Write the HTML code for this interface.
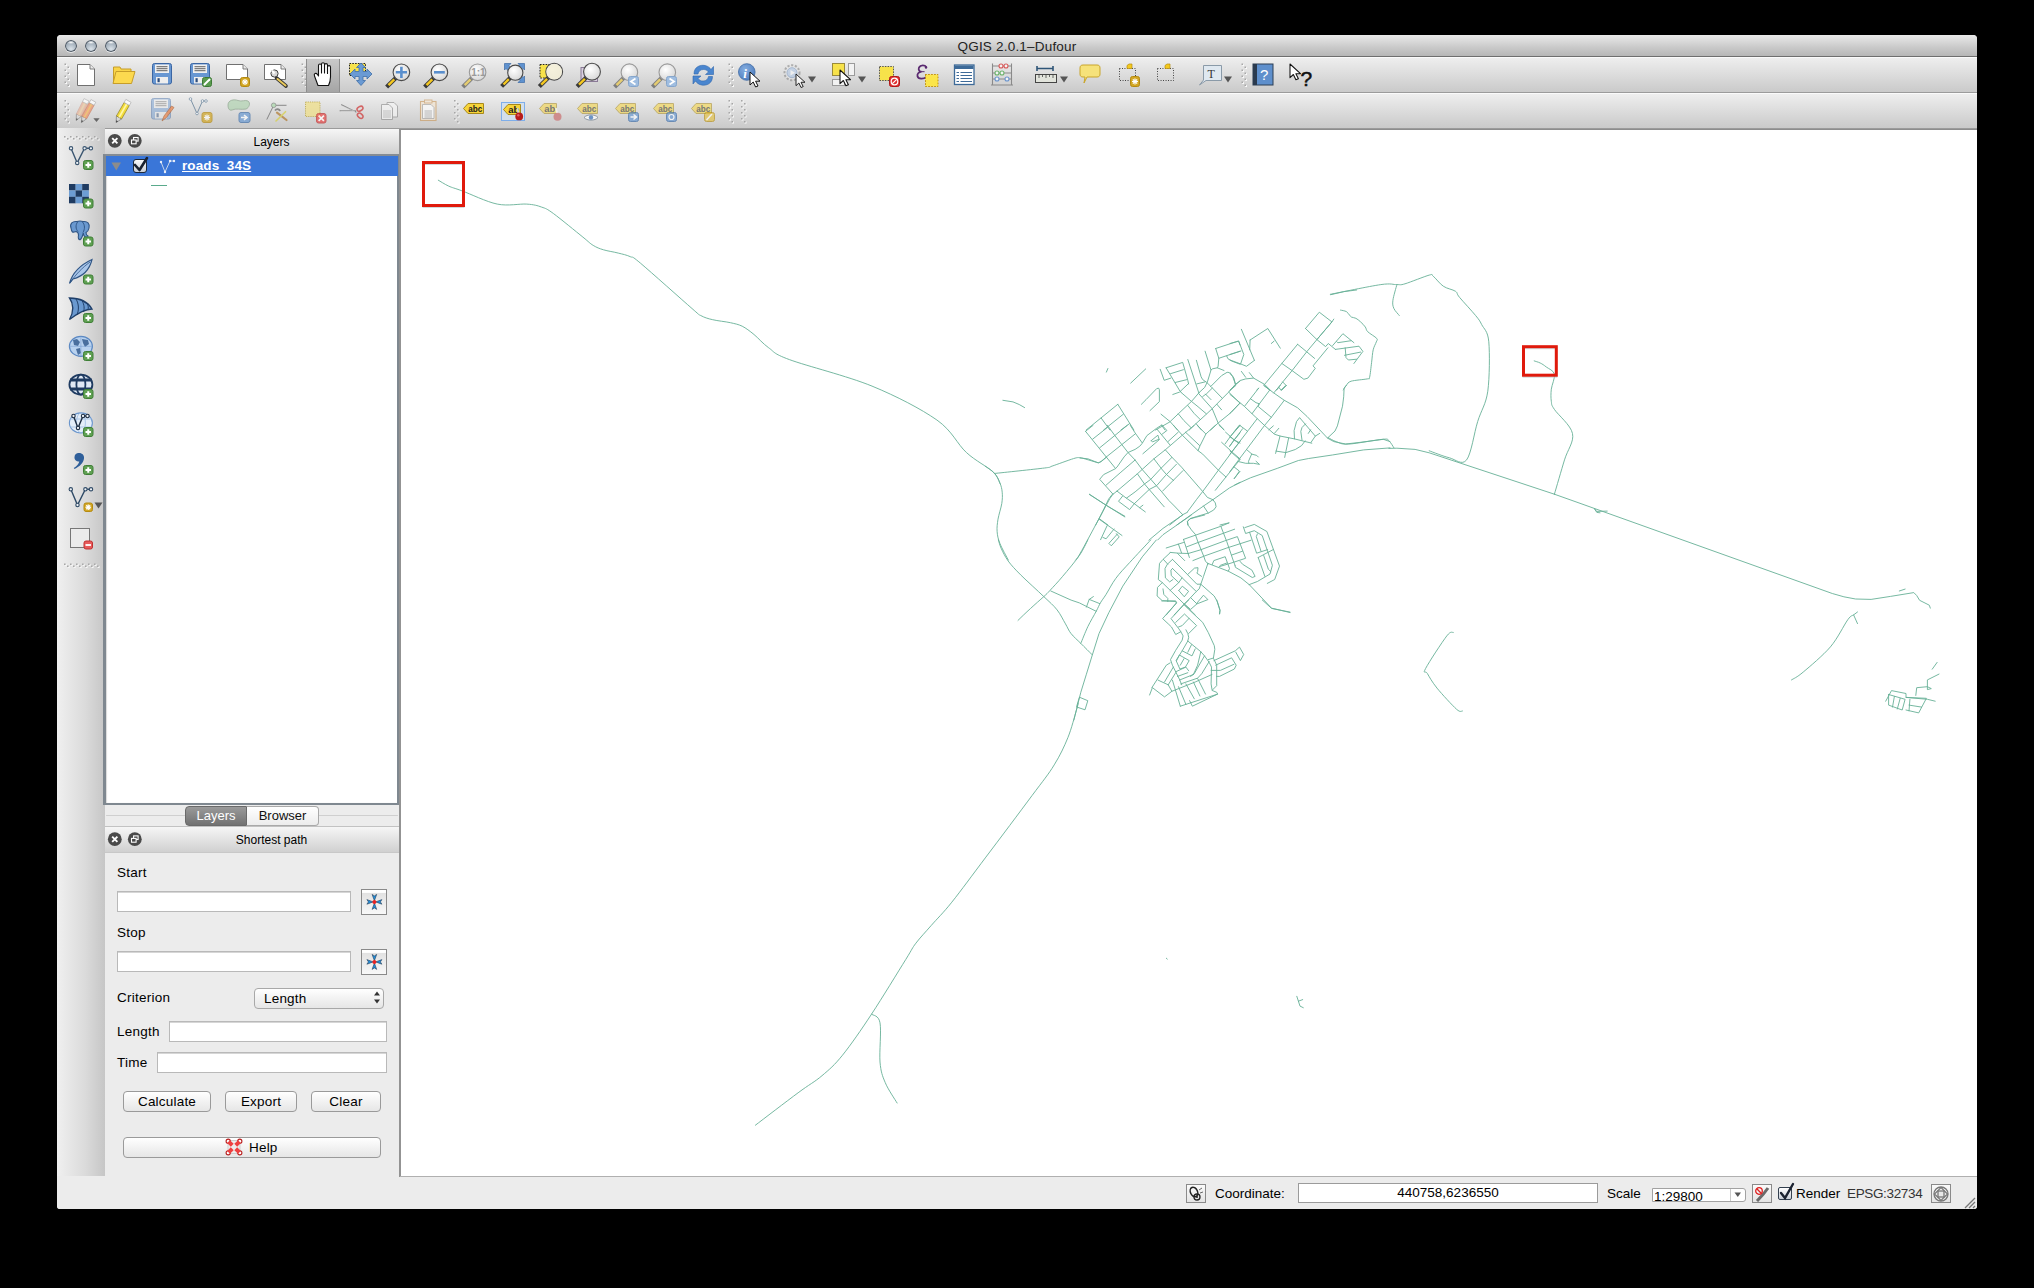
<!DOCTYPE html>
<html><head><meta charset="utf-8">
<style>
*{margin:0;padding:0;box-sizing:border-box}
html,body{width:2034px;height:1288px;background:#000;overflow:hidden;font-family:"Liberation Sans",sans-serif;font-size:13px;color:#000}
.a{position:absolute}
#win{left:57px;top:35px;width:1920px;height:1174px;background:#ececec;border-radius:4px 4px 3px 3px;overflow:hidden}
#title{left:0;top:0;width:1920px;height:22px;background:linear-gradient(#e9e9e9,#c9c9c9 60%,#b6b6b6);border-bottom:1px solid #6e6e6e}
#title .t{left:0;top:4px;width:1920px;text-align:center;font-size:13.5px;letter-spacing:0.2px;color:#222}
.tl{width:12px;height:12px;border-radius:50%;top:5px;background:radial-gradient(ellipse 35% 14% at 50% 20%,rgba(255,255,255,0.95),rgba(255,255,255,0) 100%),radial-gradient(circle at 50% 75%,#dbe3ea 0,#a9b5c0 50%,#8593a0 100%);box-shadow:inset 0 0 0 1px #4b5560,0 1px 0 rgba(255,255,255,0.6)}
.tb{left:0;width:1920px;height:36px;background:linear-gradient(#eeeeee,#cacaca);border-top:1px solid #fafafa;border-bottom:1px solid #9b9b9b}
.grip{width:5px;background-image:radial-gradient(circle,#a9a9a9 0 1px,transparent 1.2px);background-size:5px 5px}
#ltb{left:0;top:93px;width:48px;height:1048px;background:linear-gradient(90deg,#f0f0f0,#dadada 60%,#c6c6c6)}
#dock1{left:48px;top:94px;width:295px;height:676px}
.dtitle{left:0;top:0;width:295px;height:25px;background:linear-gradient(#f6f6f6,#d0d0d0)}
.dtitle .t{left:38px;top:6px;width:257px;text-align:center;font-size:12px}
.cbtn{width:14px;height:14px;border-radius:50%;background:#4a4a4a;top:5px}
#map{left:342px;top:94px;width:1578px;height:1048px;background:#fff;border-top:1px solid #8d8d8d;border-left:2px solid #939393}
#status{left:0;top:1142px;width:1920px;height:33px;background:#ececec}
#status:before{content:"";position:absolute;left:343px;top:-1px;width:1577px;height:1px;background:#b0b0b0}
.inp{background:#fff;border:1px solid #b9b9b9;box-shadow:inset 0 1px 0 #d6d6d6}
.btn{background:linear-gradient(#fff,#f2f2f2 50%,#e6e6e6);border:1px solid #9a9a9a;border-radius:4px;text-align:center;font-size:13.5px;letter-spacing:0.2px}
.lbl{font-size:13.5px;letter-spacing:0.25px}
</style></head><body>
<div id="win" class="a">
  <div id="title" class="a">
    <div class="a tl" style="left:8px"></div>
    <div class="a tl" style="left:28px"></div>
    <div class="a tl" style="left:48px"></div>
    <div class="a t">QGIS 2.0.1&#8211;Dufour</div>
  </div>
  <div class="a tb" style="top:22px"></div>
  <div class="a tb" style="top:58px"></div>
  <div id="ltb" class="a"></div>
  <div id="dock1" class="a">
    <div class="a dtitle"><div class="a t">Layers</div></div>
    <div class="a" style="left:-2px;top:25px;width:297px;height:651px;background:#fff;border:2px solid #7f8890;border-left:3px solid #7f8890;border-right:3px solid #7f8890;border-top:2px solid #858c94;box-shadow:inset 1px 0 1px rgba(0,0,0,0.15)"></div>
  </div>
  <!-- layers list content (page coords offset) -->
  <div class="a" style="left:49px;top:121px;width:292px;height:20px;background:#3a76d8"></div>
  <svg class="a" style="left:54px;top:127px" width="11" height="9"><path d="M0.5 0.5 L10 0.5 L5.3 8.5Z" fill="#8c8c8c"/></svg>
  <div class="a" style="left:76px;top:124px;width:14px;height:14px;border-radius:3px;background:linear-gradient(#fafafa,#c9ced6);border:1px solid #1f2a38"></div>
  <svg class="a" style="left:74px;top:120px" width="20" height="20"><path d="M4 10 L8.5 15 L16 3" stroke="#1a2230" stroke-width="2.6" fill="none" stroke-linecap="round" stroke-linejoin="round"/></svg>
  <svg class="a" style="left:102px;top:123px" width="18" height="16"><path d="M2 4 L6 14 L11 3 L15 3" stroke="#c8d6ea" stroke-width="1" fill="none"/><circle cx="2" cy="4" r="1.2" fill="#e8eef8"/><circle cx="6" cy="14" r="1.2" fill="#e8eef8"/><circle cx="11" cy="3" r="1.2" fill="#e8eef8"/><circle cx="15" cy="3" r="1.2" fill="#e8eef8"/></svg>
  <div class="a" style="left:125px;top:123px;font-size:13.5px;font-weight:bold;color:#fff;text-decoration:underline;letter-spacing:0.1px">roads_34S</div>
  <div class="a" style="left:94px;top:150px;width:16px;height:1px;background:#5aaa8c"></div>

  <!-- tab bar -->
  <div class="a" style="left:49px;top:780px;width:292px;height:1px;background:#cfcfcf;border-radius:2px"></div>
  <div class="a" style="left:128px;top:771px;width:62px;height:20px;border-radius:4px 0 0 4px;background:linear-gradient(#9a9a9a,#727272);border:1px solid #6a6a6a;color:#fff;text-align:center;font-size:13px;line-height:18px">Layers</div>
  <div class="a" style="left:190px;top:771px;width:72px;height:20px;border-radius:0 4px 4px 0;background:linear-gradient(#ffffff,#ececec);border:1px solid #a9a9a9;border-left:none;color:#111;text-align:center;font-size:13px;line-height:18px">Browser</div>
  <div class="a" style="left:48px;top:791px;width:295px;height:1px;background:#c2c2c2"></div>

  <!-- shortest path dock -->
  <div class="a" style="left:48px;top:792px;width:295px;height:349px">
    <div class="a dtitle"><div class="a t">Shortest path</div></div>
    <div class="a" style="left:0;top:25px;width:295px;height:1px;background:#c8c8c8"></div>
  </div>
  <div class="a lbl" style="left:60px;top:830px">Start</div>
  <div class="a inp" style="left:60px;top:856px;width:234px;height:21px"></div>
  <div class="a btn" style="left:304px;top:854px;width:26px;height:26px;border-radius:0;border-color:#8a8a8a;background:linear-gradient(#fff 0,#fff 10%,#e2e2e2 14%,#f8f8f8 100%)"></div>
  <div class="a lbl" style="left:60px;top:890px">Stop</div>
  <div class="a inp" style="left:60px;top:916px;width:234px;height:21px"></div>
  <div class="a btn" style="left:304px;top:914px;width:26px;height:26px;border-radius:0;border-color:#8a8a8a;background:linear-gradient(#fff 0,#fff 10%,#e2e2e2 14%,#f8f8f8 100%)"></div>
  <div class="a lbl" style="left:60px;top:955px">Criterion</div>
  <div class="a btn" style="left:197px;top:953px;width:130px;height:21px;text-align:left;padding-left:9px;line-height:19px;border-color:#a8a8a8">Length</div>
  <div class="a lbl" style="left:60px;top:989px">Length</div>
  <div class="a inp" style="left:112px;top:986px;width:218px;height:21px"></div>
  <div class="a lbl" style="left:60px;top:1020px">Time</div>
  <div class="a inp" style="left:100px;top:1017px;width:230px;height:21px"></div>
  <div class="a btn" style="left:66px;top:1056px;width:88px;height:21px;line-height:19px">Calculate</div>
  <div class="a btn" style="left:168px;top:1056px;width:72px;height:21px;line-height:19px">Export</div>
  <div class="a btn" style="left:254px;top:1056px;width:70px;height:21px;line-height:19px">Clear</div>
  <div class="a btn" style="left:66px;top:1102px;width:258px;height:21px;line-height:19px;text-align:left;padding-left:125px">Help</div>

  <div id="map" class="a"></div>
  <div id="status" class="a">
    <div class="a" style="left:1129px;top:7px;width:20px;height:19px;border:1px solid #8a8a8a;background:linear-gradient(#fafafa,#e4e4e4)"></div>
    <svg class="a" style="left:1131px;top:9px" width="16" height="16"><ellipse cx="6" cy="6" rx="3.5" ry="5" fill="none" stroke="#222" stroke-width="1.5" transform="rotate(-25 6 6)"/><circle cx="9" cy="11" r="3" fill="none" stroke="#222" stroke-width="1.3"/><circle cx="9" cy="11" r="1" fill="#222"/><path d="M11 4 L14 2 M12 7 L15 6" stroke="#444" stroke-width="0.8"/></svg>
    <div class="a" style="left:1158px;top:9px;font-size:13.5px">Coordinate:</div>
    <div class="a" style="left:1241px;top:6px;width:300px;height:20px;background:#fff;border:1px solid #9b9b9b;text-align:center;font-size:13.5px;line-height:18px;padding-left:0px">440758,6236550</div>
    <div class="a" style="left:1550px;top:9px;font-size:13.5px">Scale</div>
    <div class="a" style="left:1595px;top:11px;width:94px;height:14px;background:#fff;border:1px solid #a2a2a2;border-radius:0 3px 3px 0;font-size:13.5px;line-height:16px;padding-left:1px;overflow:visible">1:29800</div>
    <div class="a" style="left:1673px;top:12px;width:1px;height:12px;background:#c9c9c9"></div>
    <svg class="a" style="left:1677px;top:15px" width="8" height="6"><path d="M0.5 0.5 L7 0.5 L3.8 5Z" fill="#555"/></svg>
    <div class="a" style="left:1695px;top:7px;width:20px;height:19px;border:1px solid #8a8a8a;background:linear-gradient(#fafafa,#e4e4e4)"></div>
    <svg class="a" style="left:1697px;top:9px" width="16" height="16"><path d="M3 15 C6 12 10 8 14 2" stroke="#6a6a6a" stroke-width="3" fill="none"/><circle cx="5" cy="5" r="3.3" fill="none" stroke="#e02020" stroke-width="1.3"/><path d="M2.8 2.8 L7.2 7.2" stroke="#e02020" stroke-width="1.3"/></svg>
    <div class="a" style="left:1721px;top:10px;width:14px;height:13px;border:1px solid #33404f;border-radius:2px;background:linear-gradient(#fff,#c8ced8)"></div>
    <svg class="a" style="left:1721px;top:4px" width="18" height="20"><path d="M3 12 L7 17 L15 3" stroke="#1a2230" stroke-width="2.4" fill="none" stroke-linecap="round"/></svg>
    <div class="a" style="left:1739px;top:9px;font-size:13.5px">Render</div>
    <div class="a" style="left:1790px;top:9px;font-size:13.5px;color:#333;letter-spacing:-0.35px">EPSG:32734</div>
    <div class="a" style="left:1874px;top:7px;width:20px;height:19px;border:1px solid #8a8a8a;background:linear-gradient(#fafafa,#e4e4e4)"></div>
    <svg class="a" style="left:1876px;top:9px" width="16" height="16"><circle cx="8" cy="8" r="7" fill="none" stroke="#777" stroke-width="1.3"/><path d="M8 1.5 L14.5 8 L8 14.5 L1.5 8 Z" fill="none" stroke="#777" stroke-width="1.2"/><rect x="5" y="5" width="6" height="6" fill="#e8e8e8" stroke="#777" stroke-width="1.3"/></svg>
    <svg class="a" style="left:1906px;top:20px" width="13" height="13"><path d="M12 1 L2 11 M12 5 L6 11 M12 9 L10 11" stroke="#777" stroke-width="1.3"/></svg>
  </div>
</div>
<!--ROADS--><svg class="a" style="left:0;top:0" width="2034" height="1288" viewBox="0 0 2034 1288"><defs><clipPath id="mc"><rect x="401" y="130" width="1575" height="1046"/></clipPath></defs><g clip-path="url(#mc)" fill="none" stroke="#66b096" stroke-width="0.9" stroke-linejoin="round" stroke-linecap="round"><path d="M1554.4 494.2 L1580.0 503.3 L1832.3 593.5 L1843.9 596.8 L1855.6 599.0 L1871.1 599.4 L1890.5 596.4 L1913.8 592.6 L1916.7 595.5 L1919.6 600.3 L1929.3 605.2 L1930.3 608.1 M1594.6 508.7 L1596.5 511.4 L1607.2 511.1 M1899.3 591.0 L1905.1 589.1 M1857.5 612.0 C1856.9 612.5 1855.3 613.6 1853.6 614.9 C1852.0 616.2 1851.7 614.4 1847.8 619.7 C1843.9 625.1 1837.8 638.2 1830.4 646.9 C1822.9 655.6 1809.7 666.6 1803.2 672.1 C1796.7 677.6 1793.5 678.6 1791.5 679.9 M1853.6 614.9 L1857.5 623.6 M1932.2 669.2 L1937.1 662.4 M1885.7 701.2 L1891.5 690.6 L1906.0 693.5 L1906.0 697.4 L1927.4 699.3 L1935.2 701.2 M1888.6 694.5 L1905.1 699.3 L1902.2 710.0 L1888.6 705.1 L1888.6 694.5 M1894.4 696.4 L1892.5 707.1 M1900.2 698.3 L1897.3 709.0 M1906.0 697.4 L1926.4 698.3 L1918.7 712.9 L1906.0 710.0 M1909.9 699.3 L1909.0 710.9 M1909.0 705.1 L1921.6 707.1 M1915.8 695.4 L1916.7 687.7 L1927.4 686.7 L1931.3 688.6 L1927.4 689.6 L1927.4 679.9 L1939.0 674.1 M1002.9 400.3 L1013.0 401.9 L1019.2 404.5 L1024.6 407.6 M1330.3 294.3 C1338.7 292.7 1369.7 286.2 1380.8 284.6 C1391.9 283.0 1392.9 284.8 1396.9 284.6 C1400.9 284.5 1399.6 285.4 1405.0 283.8 C1410.4 282.2 1424.5 276.4 1429.2 275.1 C1433.9 273.9 1430.9 274.3 1433.2 276.2 C1435.6 278.0 1439.6 283.7 1443.3 286.2 C1447.0 288.8 1452.8 289.4 1455.5 291.3 C1458.1 293.1 1456.1 293.3 1459.5 297.3 C1462.9 301.4 1471.9 311.0 1475.6 315.5 C1479.3 320.1 1479.5 320.2 1481.7 324.6 C1483.9 329.0 1487.8 330.7 1488.8 341.8 C1489.8 352.9 1489.6 377.9 1487.8 391.2 C1485.9 404.5 1481.2 410.1 1477.7 421.5 C1474.1 432.9 1471.3 453.8 1466.6 459.9 C1461.8 465.9 1455.6 459.4 1449.4 457.8 C1443.2 456.3 1432.6 452.0 1429.2 450.8 M1396.9 284.6 C1396.2 287.3 1393.4 296.4 1392.9 300.4 C1392.4 304.3 1392.8 305.9 1393.9 308.5 C1395.0 311.0 1398.4 314.3 1399.3 315.5 M1388.8 448.4 L1396.9 448.2 L1415.1 449.4 L1429.2 452.8 L1554.4 494.2 M1328.3 437.7 C1329.6 438.3 1333.0 440.6 1336.3 441.7 C1339.7 442.8 1340.7 444.5 1348.5 444.1 C1356.2 443.7 1376.0 439.8 1382.8 439.3 C1389.5 438.7 1387.0 439.3 1388.8 440.7 C1390.7 442.1 1393.0 446.6 1393.9 447.8 M1534.2 360.9 C1535.2 361.3 1538.2 362.0 1540.2 363.0 C1542.3 364.0 1543.9 365.1 1546.3 367.0 C1548.7 368.8 1553.5 370.4 1554.4 374.1 C1555.2 377.8 1551.9 384.7 1551.3 389.2 C1550.8 393.7 1550.8 398.0 1551.3 401.3 C1551.9 404.7 1550.8 404.0 1554.4 409.4 C1557.9 414.8 1570.9 425.2 1572.5 433.6 C1574.2 442.0 1567.5 449.8 1564.5 459.9 C1561.4 470.0 1556.1 488.5 1554.4 494.2 M1594.8 509.3 L1596.8 512.4 L1600.0 512.8 M438.3 180.2 C440.1 181.2 444.7 184.3 448.7 186.1 C452.6 187.9 453.8 187.8 461.9 190.8 C470.1 193.8 486.5 201.9 497.3 204.1 C508.2 206.3 519.5 203.6 526.8 204.1 C534.2 204.6 537.2 205.5 541.6 207.1 C546.0 208.6 546.5 208.5 553.4 213.5 C560.3 218.6 576.3 231.8 582.9 237.1 C589.5 242.5 589.8 243.3 593.2 245.4 C596.7 247.5 599.4 248.6 603.5 249.8 C607.7 251.1 613.9 251.9 618.3 253.1 C622.7 254.2 626.4 254.9 630.1 256.6 C633.8 258.3 630.1 254.5 640.4 263.1 C650.7 271.8 682.0 299.8 692.0 308.5 C702.1 317.3 697.4 313.7 700.9 315.6 C704.3 317.5 707.8 318.6 712.7 319.7 C717.6 320.9 725.5 321.6 730.4 322.7 C735.3 323.8 738.2 324.3 742.2 326.2 C746.1 328.2 749.6 330.9 754.0 334.5 C758.4 338.1 762.8 343.6 768.7 347.8 C774.6 351.9 772.2 353.2 789.4 359.6 C806.6 366.0 847.4 376.0 872.0 386.1 C896.6 396.2 921.1 409.0 936.9 420.0 C952.6 431.1 957.0 443.9 966.4 452.5 C975.7 461.1 987.3 466.5 992.9 471.7 C998.5 476.8 998.8 481.5 1000.0 483.5 M1453.4 632.6 C1452.3 633.2 1451.5 629.9 1446.8 635.9 C1442.2 641.9 1428.9 662.2 1425.6 668.5 C1422.4 674.8 1425.4 670.1 1427.3 673.4 C1429.2 676.7 1432.2 682.1 1437.0 688.1 C1441.9 694.1 1452.4 705.5 1456.6 709.3 C1460.9 713.1 1461.5 710.6 1462.5 710.9 M1166.3 958.2 L1167.3 959.1 M1296.8 996.3 L1300.0 1006.1 L1303.3 1007.7 M1298.4 1001.2 L1302.7 999.6 M998.4 540.0 C998.9 541.4 999.6 544.9 1001.2 548.4 C1002.8 551.9 1004.9 556.5 1008.2 561.0 C1011.4 565.4 1014.8 569.0 1020.7 574.9 C1026.7 580.9 1037.8 590.8 1043.8 596.6 C1049.9 602.4 1053.5 605.3 1057.1 609.9 C1060.7 614.4 1063.1 619.9 1065.5 623.9 C1067.8 627.8 1068.5 630.4 1071.1 633.6 C1073.6 636.9 1077.4 639.9 1080.8 643.4 C1084.3 646.9 1090.2 652.7 1092.0 654.6 M1087.8 540.0 C1086.4 542.6 1083.6 549.3 1079.4 555.4 C1075.3 561.4 1067.6 570.5 1062.7 576.3 C1057.8 582.2 1053.2 586.9 1050.1 590.3 C1047.0 593.7 1047.1 593.6 1043.8 596.6 C1040.5 599.6 1034.8 604.5 1030.5 608.5 C1026.2 612.4 1020.0 618.4 1018.0 620.4 M1050.8 591.0 L1071.1 600.1 L1079.4 602.9 L1096.2 611.3 M1086.4 607.1 L1089.2 599.4 L1093.4 596.6 M1089.2 599.4 L1099.7 603.6 M1150.7 540.0 C1147.2 543.7 1135.6 556.0 1129.8 562.4 C1123.9 568.8 1119.7 573.1 1115.8 578.4 C1111.8 583.8 1108.6 590.4 1106.0 594.5 C1103.4 598.6 1102.0 600.1 1100.4 602.9 C1098.8 605.7 1098.3 607.3 1096.2 611.3 C1094.1 615.2 1090.4 621.3 1087.8 626.7 C1085.3 632.0 1082.0 640.6 1080.8 643.4 M1156.3 540.0 L1142.3 556.8 L1122.8 586.1 L1108.8 612.7 L1099.0 633.6 L1092.0 656.0 L1086.4 674.2 L1080.8 692.3 L1073.9 720.0 M1076.7 706.3 L1079.4 697.2 L1087.8 700.7 L1085.0 709.8 L1076.7 707.0 M1078.1 703.4 C1077.9 704.6 1078.1 704.6 1076.4 710.2 C1074.7 715.9 1071.6 728.5 1067.9 737.6 C1064.2 746.7 1060.2 755.2 1054.2 764.9 C1048.3 774.6 1043.4 780.3 1032.0 795.6 C1020.6 811.0 999.3 839.4 985.9 857.1 C972.5 874.9 960.9 890.8 951.8 902.2 C942.7 913.6 937.2 918.6 931.3 925.4 C925.3 932.3 920.2 937.5 915.9 943.2 C911.6 948.9 913.1 947.7 905.7 959.6 C898.3 971.4 882.0 998.3 871.5 1014.2 C861.0 1030.2 850.7 1045.0 842.5 1055.2 C834.2 1065.5 829.4 1069.4 822.0 1075.7 C814.6 1082.0 809.2 1084.5 798.1 1092.8 C787.0 1101.0 762.5 1119.8 755.4 1125.2 M871.5 1014.2 C872.9 1015.7 878.6 1014.8 880.0 1022.8 C881.5 1030.7 879.2 1052.1 880.0 1062.0 C880.9 1072.0 882.3 1075.7 885.2 1082.5 C888.0 1089.4 895.1 1099.6 897.1 1103.0 M1106.4 372.1 L1107.9 368.5 M1130.7 383.1 L1145.7 368.9 M1141.4 404.3 L1146.1 399.6 L1156.7 388.6 L1158.7 388.2 L1159.4 389.8 L1159.4 401.6 L1150.0 410.6 M1086.3 429.9 L1117.8 404.3 M1117.8 404.3 L1133.9 430.0 M1101.2 418.1 L1109.9 430.0 M1103.6 430.0 L1123.3 414.2 M1120.9 430.0 L1129.6 423.6 M1160.2 369.3 L1164.2 380.3 L1170.9 378.1 M1166.1 367.8 L1182.7 362.4 L1187.8 380.3 L1188.6 383.9 M1166.1 367.8 L1179.9 391.0 L1181.1 392.1 M1170.5 373.7 L1183.4 369.7 M1175.2 382.5 L1186.6 379.7 M1172.8 394.5 L1179.5 392.1 L1188.6 383.5 M1187.8 359.5 L1198.8 392.9 M1196.4 360.3 L1201.1 376.8 L1202.7 379.6 L1206.6 382.3 L1211.0 386.6 L1222.4 398.4 M1205.1 351.2 L1211.0 370.1 L1207.4 381.9 L1204.7 387.4 L1199.2 392.5 M1196.8 383.9 L1205.1 381.9 M1215.7 348.5 L1238.5 341.0 L1240.0 344.9 M1218.8 358.3 L1240.0 351.2 M1215.7 348.5 L1218.8 358.3 L1218.1 366.2 L1217.3 367.8 L1212.2 368.9 L1211.0 370.1 M1217.3 367.8 L1224.0 370.5 M1226.7 356.0 L1227.9 358.7 L1231.8 361.1 L1240.0 364.2 M1210.6 386.6 L1221.6 375.6 L1227.1 372.3 L1229.1 372.5 L1232.6 376.4 L1234.6 381.9 L1235.4 384.3 M1240.0 381.1 L1235.4 384.3 L1228.7 392.1 L1222.4 398.4 L1212.2 408.7 L1205.9 414.6 L1196.0 423.6 L1189.3 430.0 M1180.7 392.1 L1191.7 401.6 L1198.0 406.7 L1206.3 413.8 M1199.2 392.5 L1191.7 401.2 L1178.3 413.8 L1169.7 422.0 L1155.5 430.0 M1212.2 388.2 L1206.6 393.7 L1202.7 396.5 M1198.8 393.7 L1212.2 408.7 L1218.4 423.6 L1224.0 430.0 M1205.5 394.1 L1211.0 399.6 M1228.7 392.1 L1240.0 403.2 M1216.9 404.3 L1221.6 409.8 M1240.0 403.2 L1231.0 412.6 L1218.4 422.8 L1210.6 430.0 M1187.8 405.5 L1194.1 413.4 L1200.4 419.7 M1161.0 414.2 L1170.1 421.6 L1177.5 430.0 M1178.3 413.8 L1183.8 420.5 L1190.9 427.5 M1161.8 425.6 L1165.0 430.0 M1196.0 423.6 L1201.5 430.0 M1240.0 425.2 L1235.8 430.0 M1330.7 294.7 L1344.1 291.6 L1356.6 290.0 M1340.5 310.1 C1341.5 310.3 1344.9 310.8 1346.4 311.6 C1347.9 312.5 1348.7 314.3 1349.6 315.2 C1350.4 316.1 1350.5 316.6 1351.5 317.1 C1352.6 317.7 1354.4 317.5 1355.9 318.3 C1357.4 319.1 1359.0 320.4 1360.6 321.9 C1362.2 323.3 1364.1 325.3 1365.3 327.0 C1366.5 328.6 1365.8 329.8 1367.7 331.7 C1369.6 333.6 1375.3 336.7 1376.7 338.4 C1378.1 340.1 1376.9 340.0 1376.3 341.9 C1375.7 343.8 1374.0 346.4 1373.2 349.8 C1372.4 353.2 1372.2 357.8 1371.6 362.4 C1371.0 367.0 1370.3 374.6 1369.6 377.3 C1368.9 380.1 1370.3 378.2 1367.3 378.9 C1364.2 379.5 1354.6 380.2 1351.1 381.2 C1347.7 382.3 1347.7 383.7 1346.4 385.2 C1345.1 386.6 1343.8 389.2 1343.3 390.0 M1305.5 328.5 L1319.3 312.2 L1331.9 321.9 L1316.9 339.6 L1305.5 328.5 M1331.9 321.9 L1333.8 319.1 M1316.9 339.6 L1325.6 346.6 L1328.3 343.5 L1335.4 349.4 M1331.9 321.9 L1316.9 339.6 L1306.7 351.8 L1292.1 370.6 L1282.7 382.0 L1276.4 390.0 M1297.6 344.3 L1264.6 384.4 M1297.6 344.3 L1306.7 351.8 L1314.6 358.4 M1281.9 363.5 L1292.1 370.6 L1303.9 379.3 L1307.9 378.1 L1315.3 368.3 L1313.0 365.9 L1327.9 347.8 M1332.7 345.5 L1342.9 333.7 L1353.9 342.7 M1336.6 341.5 L1337.8 342.7 L1351.1 340.7 M1335.4 349.4 L1359.0 346.2 L1362.9 351.4 L1353.9 363.5 M1344.5 355.3 L1360.6 352.1 M1345.2 347.8 L1346.0 357.6 L1348.4 360.0 L1356.6 359.2 M1230.0 343.5 L1238.7 341.1 L1243.8 354.5 L1240.6 363.9 M1241.4 329.3 L1254.4 360.4 M1230.0 354.5 L1241.0 351.0 M1230.0 360.0 L1240.6 363.9 L1246.5 366.3 L1254.4 360.4 M1250.1 340.0 L1267.8 328.5 L1280.3 348.2 M1250.1 340.0 L1249.7 349.8 M1271.3 343.5 L1274.1 341.1 M1230.0 372.6 L1233.9 378.1 L1235.5 384.4 M1241.4 371.4 L1245.7 377.3 M1249.3 372.6 L1253.6 378.1 M1230.0 390.0 L1240.2 380.5 L1245.7 378.9 L1253.6 378.1 L1264.6 384.4 L1270.1 390.0 M1282.7 382.0 L1285.9 385.2 L1281.1 390.0 M1276.4 390.0 L1278.8 387.5 M1256.7 390.0 L1258.7 388.3 M1085.5 431.3 L1115.4 468.3 M1085.5 431.3 L1093.0 425.4 M1092.6 439.2 L1107.5 427.4 M1099.7 447.8 L1127.2 425.4 M1106.4 456.9 L1121.7 444.7 L1135.1 434.0 M1107.5 425.4 L1114.6 435.2 L1121.3 443.9 L1128.0 452.5 L1135.1 460.0 L1142.1 469.4 L1150.8 479.3 L1161.8 491.9 L1168.9 500.5 L1174.4 506.0 L1182.7 514.7 M1130.3 425.4 L1135.1 432.9 L1142.1 442.7 M1161.8 425.0 L1156.3 428.5 L1146.9 435.6 L1142.1 443.5 L1139.8 446.2 L1135.1 449.4 L1128.0 452.5 L1124.1 456.9 L1117.0 467.1 L1115.4 468.7 L1103.6 474.6 L1099.7 479.3 L1113.0 494.2 L1117.0 491.1 M1080.0 458.0 L1087.9 458.8 L1098.1 462.8 L1101.2 461.6 L1106.4 457.3 M1106.0 485.2 L1120.9 472.2 L1135.1 460.0 M1117.0 491.1 L1137.4 473.8 L1153.9 458.8 L1165.3 449.8 L1182.3 435.2 L1194.1 425.4 M1126.4 498.2 L1135.1 491.9 L1144.5 484.0 L1150.8 479.3 L1161.0 468.3 L1172.0 457.3 M1134.3 503.7 L1149.2 489.5 L1156.7 485.6 L1165.7 475.3 L1176.4 464.3 M1162.6 491.1 L1183.0 470.6 M1142.9 453.7 L1159.4 439.6 M1151.2 440.7 L1157.9 435.2 L1159.1 439.2 L1152.4 441.9 L1151.2 440.7 M1168.1 441.5 L1178.3 432.1 M1187.4 511.9 L1196.4 499.7 L1202.7 491.5 L1218.4 470.2 L1232.6 451.0 L1240.0 441.5 M1215.3 490.3 L1234.2 466.7 L1240.0 459.6 M1205.9 434.0 L1215.3 425.4 M1225.1 443.9 L1230.2 436.8 L1240.0 425.4 M1229.5 446.6 L1234.2 439.9 L1240.0 432.9 M1234.2 478.5 L1240.0 471.4 M1169.7 525.0 L1182.7 514.7 L1187.4 512.3 M1176.8 525.0 L1203.5 506.0 L1212.9 499.7 L1229.5 487.9 L1240.0 482.4 M1212.9 499.7 L1215.3 502.9 L1216.1 506.8 L1213.7 510.0 L1208.2 513.1 L1196.4 516.6 L1190.1 518.6 L1187.4 521.8 L1187.8 525.0 M1203.5 506.0 L1208.2 513.1 M1220.0 525.0 L1228.7 522.9 M1173.6 425.4 L1182.3 435.2 L1198.0 450.6 L1202.7 454.1 L1218.4 470.2 L1225.9 476.9 M1185.4 432.1 L1199.6 445.5 M1197.2 425.4 L1205.9 434.0 L1200.0 445.8 L1198.0 450.6 M1221.6 442.3 L1232.6 452.5 L1240.0 458.8 M1225.5 432.1 L1234.2 439.9 L1240.0 443.1 M1219.2 425.4 L1224.0 429.7 M1165.3 449.8 L1172.0 457.3 L1181.5 467.1 L1189.3 476.1 L1202.7 491.5 L1207.4 497.4 L1212.9 499.7 M1153.9 458.8 L1161.8 469.1 L1166.5 474.6 L1173.6 480.5 M1137.4 473.8 L1144.5 484.0 L1149.2 489.5 L1164.2 506.8 M1117.0 491.1 L1126.4 498.2 L1134.3 503.7 L1145.3 511.9 M1139.8 507.6 L1142.9 505.2 M1122.5 496.2 L1118.5 501.3 L1129.6 509.6 L1134.3 503.7 M1089.4 494.2 L1106.0 505.2 L1124.8 516.2 M1113.0 494.2 L1109.9 498.5 L1106.7 504.4 L1095.7 525.0 M1099.7 519.0 L1107.9 525.0 M1157.1 429.3 L1170.1 445.1 M1161.8 425.0 L1166.9 430.5 L1161.8 434.4 M1230.0 390.5 L1235.9 385.4 M1230.0 394.4 L1244.2 406.2 L1252.0 413.7 L1264.6 425.5 L1274.4 434.2 L1280.3 436.1 L1294.5 438.9 L1311.8 443.2 M1244.9 405.8 L1258.7 388.1 M1230.0 413.3 L1239.4 403.5 M1250.5 398.8 L1256.0 402.7 L1259.1 403.7 L1258.3 406.6 L1271.3 417.3 M1252.0 413.7 L1269.7 390.1 L1263.8 385.4 M1273.7 392.9 L1280.3 385.4 M1263.8 385.4 L1273.7 392.9 L1284.3 400.3 L1297.6 407.8 L1307.1 416.5 L1327.5 438.1 L1333.8 441.6 L1345.6 444.0 L1359.8 442.4 L1383.4 439.3 L1390.0 441.6 M1327.5 438.1 L1335.0 431.0 L1337.4 425.9 L1342.5 406.2 L1343.7 396.8 L1344.1 388.1 L1346.4 385.4 M1278.8 387.4 L1281.5 390.5 L1286.6 385.4 M1284.3 400.3 L1271.3 417.3 L1264.2 425.9 L1246.5 449.5 L1239.4 458.9 L1230.0 471.5 M1257.1 418.8 L1248.1 430.6 L1230.0 454.2 M1230.0 436.9 L1239.4 425.1 L1247.3 431.0 M1242.6 428.7 L1230.0 445.6 M1230.0 436.9 L1238.7 443.2 M1246.5 449.5 L1252.0 454.2 L1256.7 455.4 L1258.3 457.0 M1251.6 454.2 L1248.5 461.3 L1248.9 463.3 M1239.0 461.7 L1245.7 463.3 L1253.6 463.3 L1259.5 464.4 L1256.0 461.3 M1230.0 451.1 L1239.4 459.3 M1233.9 466.8 L1239.4 471.1 L1234.3 478.6 M1268.9 429.8 L1273.3 425.9 M1274.4 433.4 L1278.8 428.3 M1294.5 438.9 L1294.1 430.6 L1296.5 421.6 L1299.6 417.6 L1315.3 436.1 L1311.0 442.4 M1315.3 436.1 L1319.7 433.4 M1302.0 440.1 L1300.8 431.4 L1302.0 427.5 L1305.5 423.9 M1308.3 433.4 L1310.6 429.8 M1280.0 436.1 L1275.6 453.4 M1288.6 438.1 L1284.7 457.4 M1276.0 451.1 L1285.9 452.6 L1295.3 449.5 L1301.6 445.6 L1305.1 440.9 M1234.7 485.0 L1250.5 477.8 L1277.2 468.4 L1298.4 460.5 L1308.7 458.5 L1332.3 455.0 L1363.7 449.9 L1390.0 447.9 M1148.9 540.2 L1163.0 528.4 L1182.7 515.0 M1157.7 540.0 L1163.0 534.7 L1191.4 515.0 M1204.7 515.0 L1195.3 517.4 L1189.8 518.9 L1187.4 521.3 L1188.2 525.2 L1191.4 529.9 L1195.3 534.3 L1197.6 541.0 L1203.9 556.7 L1205.5 561.4 L1208.3 563.8 M1166.2 548.0 L1183.5 542.5 M1183.5 539.4 L1195.7 535.1 L1220.5 526.4 L1229.1 522.9 M1183.5 539.4 L1189.4 557.5 M1186.6 546.9 L1198.0 542.5 L1234.6 529.2 M1188.2 553.5 L1200.0 550.0 L1224.4 541.0 L1237.4 536.6 L1245.6 558.3 L1233.8 562.2 L1227.5 564.2 L1219.7 566.5 M1192.9 560.6 L1204.7 555.9 L1226.8 548.0 L1251.1 540.2 M1220.9 526.4 L1226.8 541.7 L1233.8 562.2 L1235.0 565.3 M1231.5 555.1 L1242.5 551.2 M1178.4 544.1 L1181.5 552.8 M1177.6 553.5 L1184.7 560.6 M1170.1 552.4 L1178.8 553.2 L1188.2 553.5 M1207.9 563.4 L1228.3 571.2 L1240.9 577.9 L1249.2 584.6 L1271.6 608.2 L1290.0 612.5 M1212.2 564.6 L1213.8 560.6 L1225.2 556.7 L1229.5 568.5 L1228.3 571.2 M1218.9 566.9 L1220.5 565.3 L1226.8 563.0 M1240.1 561.4 L1242.5 564.2 L1251.9 570.1 L1255.1 576.4 L1252.3 577.5 L1235.4 567.3 L1235.0 565.3 M1243.3 526.8 L1245.6 533.5 L1254.3 530.7 L1262.2 535.5 L1272.4 565.3 L1270.0 574.0 L1257.4 581.5 L1249.2 584.6 M1244.8 527.6 L1254.3 524.4 L1266.9 531.5 L1279.5 566.1 L1274.7 579.5 L1267.3 583.4 M1249.6 532.3 L1256.6 553.2 L1267.7 549.6 M1257.4 533.9 L1256.3 536.6 L1261.0 551.2 M1258.2 557.5 L1264.9 576.4 M1258.2 557.5 L1273.2 549.6 M1263.7 555.5 L1268.4 569.3 L1270.8 571.6 M1207.9 563.4 L1203.5 576.4 L1199.2 588.9 L1196.1 591.7 L1190.6 597.6 L1184.3 603.9 L1174.1 615.0 M1170.1 552.8 L1163.0 559.4 L1159.5 563.4 L1158.3 579.5 L1162.3 582.6 L1157.5 587.4 L1157.1 596.0 L1162.3 600.7 L1175.6 601.5 L1176.4 603.1 L1166.2 615.0 M1172.5 559.4 L1167.4 564.2 L1165.0 568.5 L1165.4 577.9 L1169.7 581.9 L1172.9 579.5 M1163.4 559.4 L1167.8 564.2 M1172.5 559.4 L1183.1 570.1 L1196.9 584.2 L1200.4 584.2 M1172.5 568.5 L1170.9 570.1 L1171.3 575.6 L1178.8 582.6 L1170.1 590.5 M1172.5 568.5 L1196.1 591.3 M1162.3 582.6 L1178.0 598.0 L1195.3 615.0 M1188.2 574.0 L1194.5 568.1 L1198.0 567.7 L1197.6 571.6 L1196.9 573.2 L1201.6 576.4 M1178.8 590.5 L1182.3 586.2 L1188.6 591.3 L1184.3 596.8 L1178.8 590.5 M1178.8 582.6 L1181.9 577.9 M1163.0 588.9 L1163.8 594.4 L1167.8 598.4 L1167.8 601.5 M1196.9 603.1 L1203.5 595.2 L1207.9 599.6 L1196.9 603.9 L1190.6 597.6 M1184.3 603.9 L1190.6 609.4 L1196.9 603.9 M1200.8 584.2 L1214.2 596.0 L1217.3 601.5 L1220.1 610.2 L1219.7 613.7 M1161.7 600.9 L1175.7 600.9 L1176.6 602.8 L1162.6 618.6 L1168.2 623.8 L1171.5 627.0 L1175.7 634.5 L1180.8 631.7 M1188.7 600.0 L1184.0 604.7 L1171.0 618.6 L1178.9 628.9 L1180.8 631.7 L1183.1 635.9 L1182.2 640.1 L1175.7 650.3 L1170.5 659.6 L1172.4 665.2 L1179.4 679.2 L1181.7 684.8 M1184.0 604.7 L1188.7 609.3 L1202.7 622.4 L1208.3 632.6 L1214.3 645.7 L1214.8 649.4 L1213.4 658.2 L1216.7 665.2 L1216.7 685.7 L1212.0 690.4 L1216.7 692.3 L1217.6 694.1 L1192.4 706.2 L1189.6 700.6 M1175.7 622.4 L1184.5 614.0 L1196.6 625.6 L1188.7 633.5 M1178.5 627.0 L1182.2 625.6 L1189.2 618.2 M1185.9 629.8 L1187.8 633.5 L1188.7 637.3 L1187.8 641.0 L1182.2 650.8 L1176.6 659.6 M1187.8 641.0 L1200.8 651.7 L1204.5 655.9 L1209.2 662.4 L1211.5 667.1 L1211.1 683.9 L1212.0 689.5 M1182.2 650.8 L1192.0 655.9 L1195.2 648.9 M1187.8 652.2 L1191.5 644.7 M1176.6 660.6 L1179.4 655.0 L1189.2 660.6 L1185.4 667.1 L1179.9 669.0 L1176.1 660.6 M1180.3 665.2 L1184.0 658.7 M1175.7 671.8 L1185.9 667.1 L1188.7 670.8 M1193.4 674.5 L1197.6 665.2 L1200.8 651.7 M1177.5 676.4 L1187.8 672.7 M1179.4 680.1 L1193.4 674.5 M1180.8 683.9 L1197.1 678.3 M1204.5 655.9 L1198.0 667.1 L1194.3 673.6 L1190.6 676.4 M1209.2 661.5 L1201.8 673.6 L1197.1 678.7 M1208.3 659.6 L1212.9 658.2 M1213.9 660.6 L1235.3 650.8 L1239.5 647.1 L1243.7 654.5 L1240.4 660.6 L1235.8 652.2 M1215.7 665.2 L1231.6 657.8 L1236.2 665.2 L1234.4 669.0 L1219.5 676.4 L1216.7 676.4 M1211.1 670.4 L1220.4 670.4 L1233.9 664.3 M1151.9 687.6 L1166.3 665.2 L1170.1 662.9 M1158.0 680.1 L1168.2 684.8 L1171.9 691.3 L1164.5 696.9 L1152.4 687.6 L1149.6 695.0 M1164.5 682.0 L1173.3 667.1 M1168.2 684.8 L1175.7 672.7 M1171.9 691.3 L1195.2 682.0 L1212.0 674.5 M1172.4 680.1 L1180.3 706.2 M1178.5 686.7 L1185.9 704.4 M1185.9 683.9 L1194.3 698.8 M1193.4 682.0 L1199.9 696.0 M1198.0 679.2 L1205.5 694.1 M1180.3 706.2 L1217.6 694.1 M1216.7 600.0 L1219.9 610.3 L1219.5 614.0 M1262.3 600.0 L1271.6 608.4 L1290.0 612.1 M985.0 466.1 C986.6 467.3 991.8 470.3 994.3 473.1 C996.8 475.9 998.6 479.7 999.9 482.9 C1001.2 486.0 1001.9 488.8 1002.2 492.2 C1002.5 495.6 1002.5 498.9 1001.8 503.4 C1001.1 507.9 998.8 514.5 998.0 519.2 C997.3 523.9 996.8 527.3 997.1 531.3 C997.4 535.4 998.0 538.7 999.9 543.4 C1001.8 548.2 1006.9 557.3 1008.3 560.0 M994.3 473.5 C1002.7 472.6 1035.0 469.2 1044.6 468.0 C1054.3 466.7 1047.3 467.6 1052.1 466.1 C1056.9 464.5 1068.9 460.0 1073.5 458.6 C1078.2 457.2 1078.0 457.6 1080.0 457.7 C1082.1 457.8 1082.8 458.3 1085.6 459.1 C1088.4 459.9 1094.5 461.8 1096.8 462.4 C1099.2 462.9 1098.1 463.2 1099.6 462.4 C1101.2 461.5 1105.1 458.1 1106.1 457.2 M1112.7 494.0 C1112.0 494.8 1110.0 497.0 1108.9 498.7 C1107.8 500.4 1107.8 500.9 1106.1 504.3 C1104.4 507.7 1103.0 511.0 1098.7 519.2 C1094.3 527.4 1083.9 546.9 1080.0 553.7 C1076.2 560.5 1076.2 559.0 1075.4 560.0 M1089.4 494.5 L1106.1 505.2 L1124.8 516.9 M1099.2 519.2 L1122.0 535.5 M1107.1 525.7 L1100.6 539.7 M1102.9 537.4 L1106.1 538.8 L1114.1 529.0 M1117.3 534.1 L1108.9 543.4 L1111.3 545.8 L1119.2 536.9 L1116.4 533.7"/></g><rect x="423.5" y="164" width="40" height="43" fill="none" stroke="#a8b4b8" stroke-opacity="0.5" stroke-width="2"/><rect x="423.5" y="162.5" width="40" height="43" fill="none" stroke="#e01a0c" stroke-width="3"/><rect x="1523.5" y="348.2" width="32.8" height="28.5" fill="none" stroke="#a8b4b8" stroke-opacity="0.5" stroke-width="2"/><rect x="1523.5" y="346.7" width="32.8" height="28.5" fill="none" stroke="#e01a0c" stroke-width="3"/></svg><!--/ROADS-->
<!--ICONS--><svg class="a" style="left:0;top:0;pointer-events:none" width="2034" height="1288" viewBox="0 0 2034 1288"><defs>
<radialGradient id="lensg" cx="0.4" cy="0.35" r="0.7"><stop offset="0" stop-color="#ffffff"/><stop offset="1" stop-color="#d6d6d6"/></radialGradient>
<radialGradient id="bluebg" cx="0.4" cy="0.35" r="0.7"><stop offset="0" stop-color="#86aee0"/><stop offset="1" stop-color="#4d7dbf"/></radialGradient>
<linearGradient id="pressg" x1="0" y1="0" x2="0" y2="1"><stop offset="0" stop-color="#c9c9c9"/><stop offset="1" stop-color="#a5a5a5"/></linearGradient>
</defs><rect x="65.0" y="64.0" width="2" height="2" fill="#fbfbfb"/><rect x="64.5" y="63.5" width="1.6" height="1.6" fill="#a6a6a6"/><rect x="68.0" y="67.0" width="2" height="2" fill="#fbfbfb"/><rect x="67.5" y="66.5" width="1.6" height="1.6" fill="#a6a6a6"/><rect x="65.0" y="70.0" width="2" height="2" fill="#fbfbfb"/><rect x="64.5" y="69.5" width="1.6" height="1.6" fill="#a6a6a6"/><rect x="68.0" y="73.0" width="2" height="2" fill="#fbfbfb"/><rect x="67.5" y="72.5" width="1.6" height="1.6" fill="#a6a6a6"/><rect x="65.0" y="76.0" width="2" height="2" fill="#fbfbfb"/><rect x="64.5" y="75.5" width="1.6" height="1.6" fill="#a6a6a6"/><rect x="68.0" y="79.0" width="2" height="2" fill="#fbfbfb"/><rect x="67.5" y="78.5" width="1.6" height="1.6" fill="#a6a6a6"/><rect x="65.0" y="82.0" width="2" height="2" fill="#fbfbfb"/><rect x="64.5" y="81.5" width="1.6" height="1.6" fill="#a6a6a6"/><rect x="68.0" y="85.0" width="2" height="2" fill="#fbfbfb"/><rect x="67.5" y="84.5" width="1.6" height="1.6" fill="#a6a6a6"/><path d="M77.5 64.5 H90 L94.5 69 V85.5 H77.5 Z" fill="#fff" stroke="#707070"/><path d="M90 64.5 V69 H94.5" fill="#eaeaea" stroke="#707070" stroke-width="0.9"/><path d="M113.5 83.5 V67 H120 L121 69 H131 V72" fill="#f9d447" stroke="#c69d2a"/><path d="M116 71.5 H135 L131.5 83.5 H113 Z" fill="#fcd94f" stroke="#c69d2a"/><g opacity="1"><rect x="152.5" y="63.5" width="19" height="20.5" rx="2" fill="#6897d2" stroke="#3b66a3"/><rect x="155" y="64.5" width="14" height="8.5" fill="#f0f0f0"/><path d="M156.5 66.7 H167.5 M156.5 68.7 H167.5 M156.5 70.7 H167.5" stroke="#555" stroke-width="0.9"/><rect x="156" y="77" width="12" height="6.5" fill="#eeeeee"/><rect x="157.5" y="78.2" width="2.2" height="4" fill="#2c4d7e"/></g><g opacity="1"><rect x="190.5" y="63.5" width="19" height="20.5" rx="2" fill="#6897d2" stroke="#3b66a3"/><rect x="193" y="64.5" width="14" height="8.5" fill="#f0f0f0"/><path d="M194.5 66.7 H205.5 M194.5 68.7 H205.5 M194.5 70.7 H205.5" stroke="#555" stroke-width="0.9"/><rect x="194" y="77" width="12" height="6.5" fill="#eeeeee"/><rect x="195.5" y="78.2" width="2.2" height="4" fill="#2c4d7e"/></g><rect x="202.5" y="77.5" width="9" height="9" rx="2" fill="#5a9b4f" stroke="#3d7a36"/><path d="M204.5 84.5 L209.5 79.5" stroke="#fff" stroke-width="2" stroke-linecap="round"/><path d="M226.5 64.5 H243 L247.5 69 V79.5 H226.5 Z" fill="#fff" stroke="#707070"/><path d="M243 64.5 V69 H247.5" fill="#eaeaea" stroke="#707070" stroke-width="0.9"/><rect x="240.5" y="77.5" width="9" height="9" rx="2" fill="#d2a623" stroke="#b58a10"/><path d="M242.00 82.00 L248.00 82.00" stroke="#fff" stroke-width="1.2"/><path d="M242.88 79.88 L247.12 84.12" stroke="#fff" stroke-width="1.2"/><path d="M245.00 79.00 L245.00 85.00" stroke="#fff" stroke-width="1.2"/><path d="M247.12 79.88 L242.88 84.12" stroke="#fff" stroke-width="1.2"/><path d="M264.5 64.5 H281 L285.5 69 V79.5 H264.5 Z" fill="#fff" stroke="#707070"/><path d="M281 64.5 V69 H285.5" fill="#eaeaea" stroke="#707070" stroke-width="0.9"/><path d="M276.5 78 L286 86" stroke="#333" stroke-width="3.6" stroke-linecap="round"/><path d="M277.5 79 L285.5 85.5" stroke="#e9c95a" stroke-width="2" stroke-linecap="round"/><circle cx="274.5" cy="73.5" r="3.6" fill="#d8d8d8" stroke="#444" stroke-width="1"/><path d="M272 70.5 L274.5 73.5" stroke="#fff" stroke-width="2.2"/><rect x="302.1" y="64.0" width="2" height="2" fill="#fbfbfb"/><rect x="301.6" y="63.5" width="1.6" height="1.6" fill="#a6a6a6"/><rect x="305.1" y="67.0" width="2" height="2" fill="#fbfbfb"/><rect x="304.6" y="66.5" width="1.6" height="1.6" fill="#a6a6a6"/><rect x="302.1" y="70.0" width="2" height="2" fill="#fbfbfb"/><rect x="301.6" y="69.5" width="1.6" height="1.6" fill="#a6a6a6"/><rect x="305.1" y="73.0" width="2" height="2" fill="#fbfbfb"/><rect x="304.6" y="72.5" width="1.6" height="1.6" fill="#a6a6a6"/><rect x="302.1" y="76.0" width="2" height="2" fill="#fbfbfb"/><rect x="301.6" y="75.5" width="1.6" height="1.6" fill="#a6a6a6"/><rect x="305.1" y="79.0" width="2" height="2" fill="#fbfbfb"/><rect x="304.6" y="78.5" width="1.6" height="1.6" fill="#a6a6a6"/><rect x="302.1" y="82.0" width="2" height="2" fill="#fbfbfb"/><rect x="301.6" y="81.5" width="1.6" height="1.6" fill="#a6a6a6"/><rect x="305.1" y="85.0" width="2" height="2" fill="#fbfbfb"/><rect x="304.6" y="84.5" width="1.6" height="1.6" fill="#a6a6a6"/><rect x="306" y="59" width="34" height="33" fill="url(#pressg)"/><path d="M306.5 59 V92 M339.5 59 V92" stroke="#8e8e8e" stroke-width="1"/><path d="M318 85.5 L314.5 76 C313.5 73.5 316 72.5 317.5 74.5 L318.5 76 V65.5 C318.5 63.5 321.5 63.5 321.5 65.5 V73 V64.2 C321.5 62.3 324.5 62.3 324.5 64.2 V73 V65 C324.5 63.2 327.5 63.2 327.5 65 V73.5 V67 C327.5 65.2 330.5 65.2 330.5 67 V77 C330.5 80 330 82.5 328.5 85.5 Z" fill="#fff" stroke="#111" stroke-width="1.1" stroke-linejoin="round"/><rect x="349.5" y="63.5" width="16" height="12" fill="#f7e24a" stroke="#222" stroke-width="1" stroke-dasharray="1.6 1.2"/><path d="M361 63 L365.5 67.5 H363 V71.5 H367 V69 L372 74 L367 79 V76.5 H363 V80.5 H365.5 L361 85.5 L356.5 80.5 H359 V76.5 H355 V79 L350 74 L355 69 V71.5 H359 V67.5 H356.5 Z" fill="#6a9ad3" stroke="#3f6ea8" stroke-width="0.8"/><g opacity="1"><path d="M396.3 77.4 L388.1 85.6" stroke="#3a3a3a" stroke-width="4.2" stroke-linecap="square"/><path d="M394.3 79.4 L388.5 85.2" stroke="#f5c820" stroke-width="2.4" stroke-linecap="butt"/></g><circle cx="401.4" cy="72.3" r="8.3" fill="url(#lensg)" stroke="#4a4a4a" stroke-width="1.1"/><path d="M395.8 72.3 H407 M401.4 66.7 V77.9" stroke="#5a8fcd" stroke-width="2.6"/><g opacity="1"><path d="M434.3 77.4 L426.1 85.6" stroke="#3a3a3a" stroke-width="4.2" stroke-linecap="square"/><path d="M432.3 79.4 L426.5 85.2" stroke="#f5c820" stroke-width="2.4" stroke-linecap="butt"/></g><circle cx="439.4" cy="72.3" r="8.3" fill="url(#lensg)" stroke="#4a4a4a" stroke-width="1.1"/><path d="M434 72.3 H444.8" stroke="#5a8fcd" stroke-width="2.6"/><g opacity="0.55"><path d="M472.5 77.4 L464.3 85.6" stroke="#3a3a3a" stroke-width="4.2" stroke-linecap="square"/><path d="M470.5 79.4 L464.7 85.2" stroke="#f5c820" stroke-width="2.4" stroke-linecap="butt"/></g><circle cx="477.6" cy="72.3" r="8.3" fill="url(#lensg)" stroke="#9a9a9a" stroke-width="1.1"/><text x="471.2" y="76.2" font-family="Liberation Sans" font-weight="bold" font-size="10" fill="#9a9a9a">1:1</text><path d="M504.5 63.5 H511 L509 65.5 L512 68.5 L509 71.5 L506 68.5 L504.5 70 Z M524.5 63.5 V70 L522.5 68 L519.5 71 L516.5 68 L519.5 65 L518 63.5 Z M524.5 82.5 H518 L520 80.5 L517 77.5 L520 74.5 L523 77.5 L524.5 76 Z" fill="#5f92cf" stroke="#3b6aa6" stroke-width="0.7"/><g opacity="1"><path d="M510.6 77.4 L503.1 84.9" stroke="#3a3a3a" stroke-width="4.2" stroke-linecap="square"/><path d="M508.8 79.2 L503.5 84.5" stroke="#f5c820" stroke-width="2.4" stroke-linecap="butt"/></g><circle cx="515.3" cy="72.7" r="7.6" fill="url(#lensg)" stroke="#4a4a4a" stroke-width="1.1"/><rect x="540" y="64.5" width="18" height="13.5" fill="#f7e24a" stroke="#222" stroke-width="1" stroke-dasharray="1.6 1.2"/><g opacity="1"><path d="M549.0 76.9 L540.8 85.1" stroke="#3a3a3a" stroke-width="4.2" stroke-linecap="square"/><path d="M547.1 78.8 L541.2 84.7" stroke="#f5c820" stroke-width="2.4" stroke-linecap="butt"/></g><circle cx="554.2" cy="71.7" r="8.4" fill="url(#lensg)" stroke="#4a4a4a" stroke-width="1.1"/><circle cx="554.2" cy="71.7" r="7.8" fill="#f3efd6" opacity="0.85"/><rect x="581" y="67.5" width="16.5" height="14" fill="#d9cfe0" stroke="#8a7a96" stroke-width="1"/><g opacity="1"><path d="M586.8 76.9 L578.6 85.1" stroke="#3a3a3a" stroke-width="4.2" stroke-linecap="square"/><path d="M584.9 78.8 L579.0 84.7" stroke="#f5c820" stroke-width="2.4" stroke-linecap="butt"/></g><circle cx="592" cy="71.7" r="8.4" fill="url(#lensg)" stroke="#4a4a4a" stroke-width="1.1"/><g opacity="0.55"><path d="M624.3 77.3 L616.1 85.5" stroke="#3a3a3a" stroke-width="4.2" stroke-linecap="square"/><path d="M622.3 79.3 L616.5 85.1" stroke="#f5c820" stroke-width="2.4" stroke-linecap="butt"/></g><circle cx="629.4" cy="72.2" r="8.3" fill="url(#lensg)" stroke="#9a9a9a" stroke-width="1.1"/><rect x="628.5" y="76.5" width="10" height="10" rx="2" fill="#9fbde0" stroke="#86a6cc"/><path d="M635.5 78.5 L631 81.5 L635.5 84.5" stroke="#fff" stroke-width="1.8" fill="none"/><g opacity="0.55"><path d="M662.2 77.3 L654.0 85.5" stroke="#3a3a3a" stroke-width="4.2" stroke-linecap="square"/><path d="M660.2 79.3 L654.4 85.1" stroke="#f5c820" stroke-width="2.4" stroke-linecap="butt"/></g><circle cx="667.3" cy="72.2" r="8.3" fill="url(#lensg)" stroke="#9a9a9a" stroke-width="1.1"/><rect x="666.5" y="76.5" width="10" height="10" rx="2" fill="#9fbde0" stroke="#86a6cc"/><path d="M669.5 78.5 L674 81.5 L669.5 84.5" stroke="#fff" stroke-width="1.8" fill="none"/><path d="M694 74 C694 67 700 64.5 705 65.5 C708 66 710 68 711 69.5 L713.5 66.5 V74.5 H705.5 L708.5 72 C707 70 705.5 69.5 703.5 69.5 C700 69.5 698.5 71.5 698 74 Z" fill="#4a86cf" stroke="#2f66ad" stroke-width="0.6"/><path d="M712.5 76.5 C712.5 83.5 706.5 86 701.5 85 C698.5 84.5 696.5 82.5 695.5 81 L693 84 V76 H701 L698 78.5 C699.5 80.5 701 81 703 81 C706.5 81 708 79 708.5 76.5 Z" fill="#4a86cf" stroke="#2f66ad" stroke-width="0.6"/><rect x="729.0" y="64.0" width="2" height="2" fill="#fbfbfb"/><rect x="728.5" y="63.5" width="1.6" height="1.6" fill="#a6a6a6"/><rect x="732.0" y="67.0" width="2" height="2" fill="#fbfbfb"/><rect x="731.5" y="66.5" width="1.6" height="1.6" fill="#a6a6a6"/><rect x="729.0" y="70.0" width="2" height="2" fill="#fbfbfb"/><rect x="728.5" y="69.5" width="1.6" height="1.6" fill="#a6a6a6"/><rect x="732.0" y="73.0" width="2" height="2" fill="#fbfbfb"/><rect x="731.5" y="72.5" width="1.6" height="1.6" fill="#a6a6a6"/><rect x="729.0" y="76.0" width="2" height="2" fill="#fbfbfb"/><rect x="728.5" y="75.5" width="1.6" height="1.6" fill="#a6a6a6"/><rect x="732.0" y="79.0" width="2" height="2" fill="#fbfbfb"/><rect x="731.5" y="78.5" width="1.6" height="1.6" fill="#a6a6a6"/><rect x="729.0" y="82.0" width="2" height="2" fill="#fbfbfb"/><rect x="728.5" y="81.5" width="1.6" height="1.6" fill="#a6a6a6"/><rect x="732.0" y="85.0" width="2" height="2" fill="#fbfbfb"/><rect x="731.5" y="84.5" width="1.6" height="1.6" fill="#a6a6a6"/><circle cx="746.8" cy="72" r="8.3" fill="url(#bluebg)" stroke="#3d6aa5" stroke-width="0.8"/><text x="743.3" y="77.5" font-family="Liberation Serif" font-style="italic" font-weight="bold" font-size="13" fill="#fff">i</text><path transform="translate(750 72) scale(1.0)" d="M0 0 L0 13 L3.2 10 L5.6 15 L8 14 L5.6 9.2 L10 9.2 Z" fill="#fff" stroke="#111" stroke-width="1" stroke-linejoin="round"/><g opacity="0.5"><circle cx="792" cy="72.7" r="7.5" fill="#e8e8e8" stroke="#777" stroke-width="2" stroke-dasharray="2.2 1.6"/><circle cx="792" cy="72.7" r="5" fill="#a9c4e6" stroke="#6d8fbf"/><path d="M790.5 70 L795 72.7 L790.5 75.4 Z" fill="#fff"/></g><path transform="translate(796 74) scale(0.9)" d="M0 0 L0 13 L3.2 10 L5.6 15 L8 14 L5.6 9.2 L10 9.2 Z" fill="#f4f4f4" stroke="#111" stroke-width="1" stroke-linejoin="round"/><path d="M808 76.5 H816 L812 82.5 Z" fill="#555"/><rect x="832.5" y="63.5" width="12" height="12" fill="#f7e24a" stroke="#9a8a3a"/><rect x="848.5" y="63.5" width="6" height="12" fill="#f2f2f2" stroke="#9a9a9a"/><rect x="832.5" y="79.5" width="12" height="6" fill="#f2f2f2" stroke="#9a9a9a"/><path transform="translate(840 70) scale(1.05)" d="M0 0 L0 13 L3.2 10 L5.6 15 L8 14 L5.6 9.2 L10 9.2 Z" fill="#fff" stroke="#111" stroke-width="1" stroke-linejoin="round"/><path d="M858 76.5 H866 L862 82.5 Z" fill="#555"/><rect x="879.5" y="66.5" width="14" height="14" fill="#f7e24a" stroke="#555" stroke-dasharray="1.5 1.2"/><rect x="889.5" y="76.5" width="10" height="10" rx="2" fill="#e03030" stroke="#b01818"/><circle cx="894.5" cy="81.5" r="3.3" fill="none" stroke="#fff" stroke-width="1.2"/><path d="M892.3 83.7 L896.7 79.3" stroke="#fff" stroke-width="1.2"/><path d="M926.3 67 C925 65 920.5 64.5 919 67.5 C918 69.8 919.5 71.6 921.5 71.7 C918.5 72 917 74 917.5 76.3 C918.2 79.3 923.5 79.5 926.5 76.8" fill="none" stroke="#5a2a70" stroke-width="1.8" stroke-linecap="round"/><circle cx="926" cy="67.6" r="1.2" fill="#5a2a70"/><path d="M920 71.7 H924.6" stroke="#5a2a70" stroke-width="1"/><rect x="925.5" y="74.5" width="12.5" height="12" fill="#fbe54a" stroke="#c0900e" stroke-width="1" stroke-dasharray="0.9 2.1" stroke-linecap="round"/><rect x="954.5" y="65" width="19.5" height="19.5" fill="#fff" stroke="#3d6a98" stroke-width="1.3"/><rect x="955" y="65.5" width="18.5" height="3.5" fill="#3d6a98"/><path d="M956.5 72.5 H959 M960.5 72.5 H972 M956.5 75.5 H959 M960.5 75.5 H972 M956.5 78.5 H959 M960.5 78.5 H972 M956.5 81.5 H959 M960.5 81.5 H972" stroke="#3d6a98" stroke-width="1.2"/><path d="M991 85 H1013 M992.5 85 V63.5 M1011.5 85 V63.5 M992.5 66 H1011.5 M992.5 73 H1011.5 M992.5 79 H1011.5" stroke="#8a8a8a" stroke-width="1.1"/><g fill="#f2f2f2" stroke-width="1.1"><circle cx="1001" cy="66" r="2" stroke="#d95a5a"/><circle cx="1006" cy="66" r="2" stroke="#d95a5a"/><circle cx="997" cy="73" r="2" stroke="#6db36d"/><circle cx="1002" cy="73" r="2" stroke="#6db36d"/><circle cx="997" cy="79" r="2" stroke="#6b95cf"/><circle cx="1007" cy="79" r="2" stroke="#6b95cf"/></g><path d="M1037 68.5 H1053 M1037 66 V71 M1053 66 V71" stroke="#2f5577" stroke-width="1.6"/><rect x="1035.5" y="74.5" width="21" height="8" fill="#e2e4dc" stroke="#444" stroke-width="1"/><path d="M1039 74.5 V78 M1042.5 74.5 V77 M1046 74.5 V78 M1049.5 74.5 V77 M1053 74.5 V78" stroke="#444" stroke-width="0.8"/><path d="M1060 76.5 H1068 L1064 82.5 Z" fill="#555"/><path d="M1083 65 H1097 C1099 65 1100 66 1100 68 V74 C1100 76 1099 77 1097 77 H1087 L1084 83 L1085 77 H1083 C1081 77 1080 76 1080 74 V68 C1080 66 1081 65 1083 65 Z" fill="#f6e27a" stroke="#c9a52a" stroke-width="1"/><rect x="1119.5" y="68.5" width="16" height="12" fill="none" stroke="#222" stroke-width="0.9" stroke-dasharray="0.9 1.6"/><path d="M1127 68.5 V65.5 L1129 64 H1132 V68.5 Z" fill="#f4c91e" stroke="#b58d10" stroke-width="0.7"/><rect x="1130.5" y="76.5" width="9" height="10" rx="2" fill="#d2a623" stroke="#b58a10"/><path d="M1132.00 81.50 L1138.00 81.50" stroke="#fff" stroke-width="1.2"/><path d="M1132.88 79.38 L1137.12 83.62" stroke="#fff" stroke-width="1.2"/><path d="M1135.00 78.50 L1135.00 84.50" stroke="#fff" stroke-width="1.2"/><path d="M1137.12 79.38 L1132.88 83.62" stroke="#fff" stroke-width="1.2"/><rect x="1157.5" y="68.5" width="16" height="12" fill="none" stroke="#222" stroke-width="0.9" stroke-dasharray="0.9 1.6"/><path d="M1165 68.5 V65.5 L1167 64 H1170 V68.5 Z" fill="#f4c91e" stroke="#b58d10" stroke-width="0.7"/><path d="M1203.5 65.5 H1221.5 V80.5 H1206 L1199.5 85 L1203.5 80 Z" fill="#dfe8f0" stroke="#8a9aa8" stroke-width="1"/><text x="1207.5" y="78" font-family="Liberation Serif" font-size="12" fill="#333">T</text><path d="M1224 76.5 H1232 L1228 82.5 Z" fill="#555"/><rect x="1242.0" y="64.0" width="2" height="2" fill="#fbfbfb"/><rect x="1241.5" y="63.5" width="1.6" height="1.6" fill="#a6a6a6"/><rect x="1245.0" y="67.0" width="2" height="2" fill="#fbfbfb"/><rect x="1244.5" y="66.5" width="1.6" height="1.6" fill="#a6a6a6"/><rect x="1242.0" y="70.0" width="2" height="2" fill="#fbfbfb"/><rect x="1241.5" y="69.5" width="1.6" height="1.6" fill="#a6a6a6"/><rect x="1245.0" y="73.0" width="2" height="2" fill="#fbfbfb"/><rect x="1244.5" y="72.5" width="1.6" height="1.6" fill="#a6a6a6"/><rect x="1242.0" y="76.0" width="2" height="2" fill="#fbfbfb"/><rect x="1241.5" y="75.5" width="1.6" height="1.6" fill="#a6a6a6"/><rect x="1245.0" y="79.0" width="2" height="2" fill="#fbfbfb"/><rect x="1244.5" y="78.5" width="1.6" height="1.6" fill="#a6a6a6"/><rect x="1242.0" y="82.0" width="2" height="2" fill="#fbfbfb"/><rect x="1241.5" y="81.5" width="1.6" height="1.6" fill="#a6a6a6"/><rect x="1245.0" y="85.0" width="2" height="2" fill="#fbfbfb"/><rect x="1244.5" y="84.5" width="1.6" height="1.6" fill="#a6a6a6"/><rect x="1253" y="64" width="20" height="21" fill="#5e8fcc" stroke="#2c3e55" stroke-width="1"/><rect x="1253" y="64" width="4" height="21" fill="#2a3a4e"/><text x="1260" y="80" font-family="Liberation Sans" font-size="15" fill="#fff">?</text><path transform="translate(1290 64) scale(1.05)" d="M0 0 L0 13 L3.2 10 L5.6 15 L8 14 L5.6 9.2 L10 9.2 Z" fill="#fff" stroke="#111" stroke-width="1" stroke-linejoin="round"/><text x="1300.5" y="85.5" font-family="Liberation Sans" font-size="21" fill="#111" stroke="#111" stroke-width="0.5">?</text><rect x="65.0" y="100.5" width="2" height="2" fill="#fbfbfb"/><rect x="64.5" y="100.0" width="1.6" height="1.6" fill="#a6a6a6"/><rect x="68.0" y="103.5" width="2" height="2" fill="#fbfbfb"/><rect x="67.5" y="103.0" width="1.6" height="1.6" fill="#a6a6a6"/><rect x="65.0" y="106.5" width="2" height="2" fill="#fbfbfb"/><rect x="64.5" y="106.0" width="1.6" height="1.6" fill="#a6a6a6"/><rect x="68.0" y="109.5" width="2" height="2" fill="#fbfbfb"/><rect x="67.5" y="109.0" width="1.6" height="1.6" fill="#a6a6a6"/><rect x="65.0" y="112.5" width="2" height="2" fill="#fbfbfb"/><rect x="64.5" y="112.0" width="1.6" height="1.6" fill="#a6a6a6"/><rect x="68.0" y="115.5" width="2" height="2" fill="#fbfbfb"/><rect x="67.5" y="115.0" width="1.6" height="1.6" fill="#a6a6a6"/><rect x="65.0" y="118.5" width="2" height="2" fill="#fbfbfb"/><rect x="64.5" y="118.0" width="1.6" height="1.6" fill="#a6a6a6"/><rect x="68.0" y="121.5" width="2" height="2" fill="#fbfbfb"/><rect x="67.5" y="121.0" width="1.6" height="1.6" fill="#a6a6a6"/><g opacity="0.8" transform="translate(76.2 120.5) rotate(-63.5)"><path d="M0 0 L6 -2.75 V2.75 Z" fill="#d8d8d8" stroke="#777" stroke-width="0.6"/><path d="M0 0 L2.2 -0.9 V0.9 Z" fill="#333"/><rect x="6" y="-2.75" width="13.6" height="5.5" fill="#e8b8a0" stroke="#d0a090" stroke-width="0.6"/><rect x="6" y="-0.9" width="13.6" height="1.8" fill="#e8d0a8"/><rect x="19.6" y="-2.75" width="3.5" height="5.5" fill="#fafafa" stroke="#aaa" stroke-width="0.6"/></g><g opacity="0.9" transform="translate(81.4 122.6) rotate(-61.1)"><path d="M0 0 L6 -2.75 V2.75 Z" fill="#d8d8d8" stroke="#777" stroke-width="0.6"/><path d="M0 0 L2.2 -0.9 V0.9 Z" fill="#333"/><rect x="6" y="-2.75" width="15.3" height="5.5" fill="#eba080" stroke="#c88060" stroke-width="0.6"/><rect x="6" y="-0.9" width="15.3" height="1.8" fill="#f0c070"/><rect x="21.3" y="-2.75" width="3.5" height="5.5" fill="#fafafa" stroke="#aaa" stroke-width="0.6"/></g><path d="M93.4 118.3 H99.6 L96.5 122 Z" fill="#666"/><g opacity="1.0" transform="translate(116.1 122.6) rotate(-60.3)"><path d="M0 0 L6 -3.0 V3.0 Z" fill="#d8d8d8" stroke="#777" stroke-width="0.6"/><path d="M0 0 L2.2 -0.9 V0.9 Z" fill="#333"/><rect x="6" y="-3.0" width="15.5" height="6" fill="#f2dc3a" stroke="#8a7a20" stroke-width="0.6"/><rect x="6" y="-0.9" width="15.5" height="1.8" fill="#fff7a8"/><rect x="21.5" y="-3.0" width="3.5" height="6" fill="#fafafa" stroke="#aaa" stroke-width="0.6"/></g><g opacity="0.45"><rect x="151.5" y="98.5" width="19" height="20.5" rx="2" fill="#6897d2" stroke="#3b66a3"/><rect x="154" y="99.5" width="14" height="8.5" fill="#f0f0f0"/><path d="M155.5 101.7 H166.5 M155.5 103.7 H166.5 M155.5 105.7 H166.5" stroke="#555" stroke-width="0.9"/><rect x="155" y="112" width="12" height="6.5" fill="#eeeeee"/><rect x="156.5" y="113.2" width="2.2" height="4" fill="#2c4d7e"/></g><path d="M162 121 L164 116 L171.5 106 L174 107.5 L166.5 117.5 Z" fill="#e89060" stroke="#a05a30" stroke-width="0.6" opacity="0.85"/><g opacity="0.75"><path d="M190.5 99 L197 113.5 L202.5 101 H206" stroke="#5d7a94" stroke-width="1" fill="none"/><circle cx="190.5" cy="99" r="1.3" fill="#fff" stroke="#5d7a94" stroke-width="0.8"/><circle cx="197" cy="113.5" r="1.3" fill="#fff" stroke="#5d7a94" stroke-width="0.8"/><circle cx="202.5" cy="101" r="1.3" fill="#fff" stroke="#5d7a94" stroke-width="0.8"/><circle cx="206" cy="101" r="1.3" fill="#fff" stroke="#5d7a94" stroke-width="0.8"/></g><g opacity="0.7"><rect x="202.0" y="112.5" width="10" height="10" rx="2" fill="#d2a623" stroke="#b58a10"/><path d="M204.00 117.50 L210.00 117.50" stroke="#fff" stroke-width="1.2"/><path d="M204.88 115.38 L209.12 119.62" stroke="#fff" stroke-width="1.2"/><path d="M207.00 114.50 L207.00 120.50" stroke="#fff" stroke-width="1.2"/><path d="M209.12 115.38 L204.88 119.62" stroke="#fff" stroke-width="1.2"/></g><g opacity="0.6"><path d="M228 105 C228 100 234 99 238 100.5 C242 102 245 99.5 248 101 C251 103 249 108 246 109 C241 110 236 108 232 110 C229 111 228 108 228 105 Z" fill="#a8d0a8" stroke="#6a8a6a" stroke-width="0.8"/></g><g opacity="0.7"><rect x="239.0" y="112.5" width="11" height="10" rx="2" fill="#6a9ad3" stroke="#3f6ea8"/><path d="M241 117.5 H246 M244 115 L247 117.5 L244 120" stroke="#fff" stroke-width="1.6" fill="none"/></g><g opacity="0.7"><path d="M266.8 119.5 L273.7 105.3 H286.5" stroke="#555" stroke-width="0.9" fill="none"/><circle cx="273.7" cy="105.3" r="2.3" fill="#a8d8a8" stroke="#666" stroke-width="0.7"/><path d="M277 112.7 L286.5 120" stroke="#b07a30" stroke-width="2.2" stroke-linecap="round"/><path d="M276 121 L285.5 111.7" stroke="#d8d040" stroke-width="1.6" stroke-linecap="round"/><path d="M275 110.5 C276.5 108.5 279.5 109 280 111" stroke="#666" stroke-width="1.8" fill="none"/></g><g opacity="0.75"><rect x="305.5" y="102" width="14.5" height="14.5" fill="#f0e08a" stroke="#b8a23a" stroke-dasharray="1.2 1"/></g><g opacity="0.75"><rect x="316.5" y="113.5" width="9.5" height="9.5" rx="2" fill="#e85050" stroke="#c03a3a"/><path d="M318.6 115.6 L323.9 120.9 M323.9 115.6 L318.6 120.9" stroke="#fff" stroke-width="1.6"/></g><g opacity="0.8"><path d="M341.5 104.8 L356 112 M340 110.7 L355.5 110.8" stroke="#777" stroke-width="1.1" stroke-linecap="round"/><path d="M341.5 105.8 L355 111.6 M341 111.3 L355 111.3" stroke="#ddd" stroke-width="0.5"/><ellipse cx="360" cy="108.7" rx="3.2" ry="2.1" transform="rotate(-30 360 108.7)" fill="none" stroke="#d04848" stroke-width="1.5"/><ellipse cx="360.2" cy="115.8" rx="3.2" ry="2.1" transform="rotate(40 360.2 115.8)" fill="none" stroke="#d04848" stroke-width="1.5"/></g><g opacity="0.55"><path d="M387 102.5 H394 L397.5 106 V117 H387 Z" fill="#fafafa" stroke="#777" stroke-width="0.9"/><path d="M381.5 104.5 H389 L392.5 108 V119.5 H381.5 Z" fill="#fafafa" stroke="#777" stroke-width="0.9"/><path d="M383 111 H391 M383 113 H391 M383 115 H391 M383 117 H391" stroke="#777" stroke-width="0.6"/></g><g opacity="0.65"><rect x="420.5" y="101.5" width="15.5" height="19" fill="#f4e6d2" stroke="#c99a60" stroke-width="1.1"/><path d="M422.5 104.5 H431 L434 107.5 V118.5 H422.5 Z" fill="#fff" stroke="#888" stroke-width="0.7"/><rect x="424.5" y="100" width="7.5" height="3" fill="#f4e6d2" stroke="#c99a60" stroke-width="0.9"/><path d="M424.5 111 H432 M424.5 113 H432 M424.5 115 H432 M424.5 117 H432" stroke="#666" stroke-width="0.6"/></g><rect x="454.5" y="100.5" width="2" height="2" fill="#fbfbfb"/><rect x="454.0" y="100.0" width="1.6" height="1.6" fill="#a6a6a6"/><rect x="457.5" y="103.5" width="2" height="2" fill="#fbfbfb"/><rect x="457.0" y="103.0" width="1.6" height="1.6" fill="#a6a6a6"/><rect x="454.5" y="106.5" width="2" height="2" fill="#fbfbfb"/><rect x="454.0" y="106.0" width="1.6" height="1.6" fill="#a6a6a6"/><rect x="457.5" y="109.5" width="2" height="2" fill="#fbfbfb"/><rect x="457.0" y="109.0" width="1.6" height="1.6" fill="#a6a6a6"/><rect x="454.5" y="112.5" width="2" height="2" fill="#fbfbfb"/><rect x="454.0" y="112.0" width="1.6" height="1.6" fill="#a6a6a6"/><rect x="457.5" y="115.5" width="2" height="2" fill="#fbfbfb"/><rect x="457.0" y="115.0" width="1.6" height="1.6" fill="#a6a6a6"/><rect x="454.5" y="118.5" width="2" height="2" fill="#fbfbfb"/><rect x="454.0" y="118.0" width="1.6" height="1.6" fill="#a6a6a6"/><rect x="457.5" y="121.5" width="2" height="2" fill="#fbfbfb"/><rect x="457.0" y="121.0" width="1.6" height="1.6" fill="#a6a6a6"/><g opacity="1"><path d="M463.5 108.5 L468 103.5 H483.5 V113.5 H468 Z" fill="#f6d43a" stroke="#a8891a"/><text x="468.3" y="111.8" font-family="Liberation Sans" font-weight="bold" font-size="9" textLength="14" lengthAdjust="spacingAndGlyphs" fill="#1a1a1a">abc</text></g><rect x="501.5" y="102.5" width="23" height="18" fill="#d3dfeb" stroke="#7eaeea" stroke-width="1"/><g opacity="1"><path d="M503.5 109.5 L508 104.5 H520.5 V114.5 H508 Z" fill="#f6d43a" stroke="#a8891a"/><text x="508.3" y="112.8" font-family="Liberation Sans" font-weight="bold" font-size="9" textLength="11" lengthAdjust="spacingAndGlyphs" fill="#1a1a1a">ab</text></g><path d="M517.5 108 L518.5 114" stroke="#fff" stroke-width="1.6"/><path d="M517.5 108 L518.5 114" stroke="#999" stroke-width="0.5"/><circle cx="519.2" cy="116.4" r="3.9" fill="#b81c1c"/><circle cx="518.3" cy="115.2" r="1.2" fill="#e06060"/><g opacity="0.55"><path d="M539.5 108.5 L544 103.5 H556.5 V113.5 H544 Z" fill="#f6d43a" stroke="#a8891a"/><text x="544.3" y="111.8" font-family="Liberation Sans" font-weight="bold" font-size="9" textLength="11" lengthAdjust="spacingAndGlyphs" fill="#1a1a1a">ab</text></g><path d="M556 108 L557 113.5" stroke="#fff" stroke-width="1.6" opacity="0.8"/><circle cx="557.5" cy="116.8" r="4" fill="#cc8080" opacity="0.85"/><g opacity="0.55"><path d="M577.5 108.5 L582 103.5 H597.5 V113.5 H582 Z" fill="#f6d43a" stroke="#a8891a"/><text x="582.3" y="111.8" font-family="Liberation Sans" font-weight="bold" font-size="9" textLength="14" lengthAdjust="spacingAndGlyphs" fill="#1a1a1a">abc</text></g><path d="M584 117.5 C587 114 595 114 598 117.5 C595 121 587 121 584 117.5 Z" fill="#fff" stroke="#6a7a8a" stroke-width="0.9" opacity="0.75"/><circle cx="591" cy="117.5" r="2.2" fill="#4a7ab8" opacity="0.8"/><g opacity="0.55"><path d="M615.5 108.5 L620 103.5 H635.5 V113.5 H620 Z" fill="#f6d43a" stroke="#a8891a"/><text x="620.3" y="111.8" font-family="Liberation Sans" font-weight="bold" font-size="9" textLength="14" lengthAdjust="spacingAndGlyphs" fill="#1a1a1a">abc</text></g><g opacity="0.7"><rect x="628.5" y="112.5" width="10" height="9" rx="2" fill="#6a9ad3" stroke="#3f6ea8"/><path d="M630.5 117 H635.5 M633.5 114.5 L636.5 117 L633.5 119.5" stroke="#fff" stroke-width="1.5" fill="none"/></g><g opacity="0.55"><path d="M653.5 108.5 L658 103.5 H673.5 V113.5 H658 Z" fill="#f6d43a" stroke="#a8891a"/><text x="658.3" y="111.8" font-family="Liberation Sans" font-weight="bold" font-size="9" textLength="14" lengthAdjust="spacingAndGlyphs" fill="#1a1a1a">abc</text></g><g opacity="0.7"><rect x="666.5" y="112.5" width="10" height="9" rx="2" fill="#6a9ad3" stroke="#3f6ea8"/><circle cx="671.5" cy="117" r="2.5" fill="none" stroke="#fff" stroke-width="1.2"/></g><g opacity="0.55"><path d="M691.5 108.5 L696 103.5 H711.5 V113.5 H696 Z" fill="#f6d43a" stroke="#a8891a"/><text x="696.3" y="111.8" font-family="Liberation Sans" font-weight="bold" font-size="9" textLength="14" lengthAdjust="spacingAndGlyphs" fill="#1a1a1a">abc</text></g><g opacity="0.65"><rect x="704.5" y="112.5" width="10" height="9" rx="2" fill="#e6c240" stroke="#b58d10"/><path d="M706.5 120 L712 114" stroke="#fff" stroke-width="1.5"/></g><rect x="729.0" y="100.5" width="2" height="2" fill="#fbfbfb"/><rect x="728.5" y="100.0" width="1.6" height="1.6" fill="#a6a6a6"/><rect x="732.0" y="103.5" width="2" height="2" fill="#fbfbfb"/><rect x="731.5" y="103.0" width="1.6" height="1.6" fill="#a6a6a6"/><rect x="729.0" y="106.5" width="2" height="2" fill="#fbfbfb"/><rect x="728.5" y="106.0" width="1.6" height="1.6" fill="#a6a6a6"/><rect x="732.0" y="109.5" width="2" height="2" fill="#fbfbfb"/><rect x="731.5" y="109.0" width="1.6" height="1.6" fill="#a6a6a6"/><rect x="729.0" y="112.5" width="2" height="2" fill="#fbfbfb"/><rect x="728.5" y="112.0" width="1.6" height="1.6" fill="#a6a6a6"/><rect x="732.0" y="115.5" width="2" height="2" fill="#fbfbfb"/><rect x="731.5" y="115.0" width="1.6" height="1.6" fill="#a6a6a6"/><rect x="729.0" y="118.5" width="2" height="2" fill="#fbfbfb"/><rect x="728.5" y="118.0" width="1.6" height="1.6" fill="#a6a6a6"/><rect x="732.0" y="121.5" width="2" height="2" fill="#fbfbfb"/><rect x="731.5" y="121.0" width="1.6" height="1.6" fill="#a6a6a6"/><rect x="741.5" y="100.5" width="2" height="2" fill="#fbfbfb"/><rect x="741.0" y="100.0" width="1.6" height="1.6" fill="#a6a6a6"/><rect x="744.5" y="103.5" width="2" height="2" fill="#fbfbfb"/><rect x="744.0" y="103.0" width="1.6" height="1.6" fill="#a6a6a6"/><rect x="741.5" y="106.5" width="2" height="2" fill="#fbfbfb"/><rect x="741.0" y="106.0" width="1.6" height="1.6" fill="#a6a6a6"/><rect x="744.5" y="109.5" width="2" height="2" fill="#fbfbfb"/><rect x="744.0" y="109.0" width="1.6" height="1.6" fill="#a6a6a6"/><rect x="741.5" y="112.5" width="2" height="2" fill="#fbfbfb"/><rect x="741.0" y="112.0" width="1.6" height="1.6" fill="#a6a6a6"/><rect x="744.5" y="115.5" width="2" height="2" fill="#fbfbfb"/><rect x="744.0" y="115.0" width="1.6" height="1.6" fill="#a6a6a6"/><rect x="741.5" y="118.5" width="2" height="2" fill="#fbfbfb"/><rect x="741.0" y="118.0" width="1.6" height="1.6" fill="#a6a6a6"/><rect x="744.5" y="121.5" width="2" height="2" fill="#fbfbfb"/><rect x="744.0" y="121.0" width="1.6" height="1.6" fill="#a6a6a6"/><rect x="64.5" y="136.5" width="2" height="2" fill="#fbfbfb"/><rect x="64.0" y="136.0" width="1.6" height="1.6" fill="#a6a6a6"/><rect x="67.5" y="138.5" width="2" height="2" fill="#fbfbfb"/><rect x="67.0" y="138.0" width="1.6" height="1.6" fill="#a6a6a6"/><rect x="70.5" y="136.5" width="2" height="2" fill="#fbfbfb"/><rect x="70.0" y="136.0" width="1.6" height="1.6" fill="#a6a6a6"/><rect x="73.5" y="138.5" width="2" height="2" fill="#fbfbfb"/><rect x="73.0" y="138.0" width="1.6" height="1.6" fill="#a6a6a6"/><rect x="76.5" y="136.5" width="2" height="2" fill="#fbfbfb"/><rect x="76.0" y="136.0" width="1.6" height="1.6" fill="#a6a6a6"/><rect x="79.5" y="138.5" width="2" height="2" fill="#fbfbfb"/><rect x="79.0" y="138.0" width="1.6" height="1.6" fill="#a6a6a6"/><rect x="82.5" y="136.5" width="2" height="2" fill="#fbfbfb"/><rect x="82.0" y="136.0" width="1.6" height="1.6" fill="#a6a6a6"/><rect x="85.5" y="138.5" width="2" height="2" fill="#fbfbfb"/><rect x="85.0" y="138.0" width="1.6" height="1.6" fill="#a6a6a6"/><rect x="88.5" y="136.5" width="2" height="2" fill="#fbfbfb"/><rect x="88.0" y="136.0" width="1.6" height="1.6" fill="#a6a6a6"/><rect x="91.5" y="138.5" width="2" height="2" fill="#fbfbfb"/><rect x="91.0" y="138.0" width="1.6" height="1.6" fill="#a6a6a6"/><rect x="94.5" y="136.5" width="2" height="2" fill="#fbfbfb"/><rect x="94.0" y="136.0" width="1.6" height="1.6" fill="#a6a6a6"/><rect x="97.5" y="138.5" width="2" height="2" fill="#fbfbfb"/><rect x="97.0" y="138.0" width="1.6" height="1.6" fill="#a6a6a6"/><path d="M71 148.3 L77.2 162.9 L84.6 148.3 L90.9 148.3" stroke="#3a5570" stroke-width="1.4" fill="none"/><circle cx="71" cy="148.3" r="1.7" fill="#eef2f6" stroke="#3a5570" stroke-width="1.1"/><circle cx="77.2" cy="162.9" r="1.7" fill="#eef2f6" stroke="#3a5570" stroke-width="1.1"/><circle cx="84.6" cy="148.3" r="1.7" fill="#eef2f6" stroke="#3a5570" stroke-width="1.1"/><circle cx="90.9" cy="148.3" r="1.7" fill="#eef2f6" stroke="#3a5570" stroke-width="1.1"/><rect x="83.5" y="160.5" width="9.5" height="9" rx="2" fill="#5fa052" stroke="#3f7f36"/><path d="M85.5 165 H91 M88.25 162.3 V167.7" stroke="#fff" stroke-width="2"/><rect x="69.0" y="184.0" width="6.7" height="6.5" fill="#1f3b61"/><rect x="69.0" y="190.4" width="6.7" height="6.5" fill="#6d9dd3"/><rect x="69.0" y="196.8" width="6.7" height="6.5" fill="#1f3b61"/><rect x="75.6" y="184.0" width="6.7" height="6.5" fill="#6d9dd3"/><rect x="75.6" y="190.4" width="6.7" height="6.5" fill="#1f3b61"/><rect x="75.6" y="196.8" width="6.7" height="6.5" fill="#6d9dd3"/><rect x="82.2" y="184.0" width="6.7" height="6.5" fill="#1f3b61"/><rect x="82.2" y="190.4" width="6.7" height="6.5" fill="#6d9dd3"/><rect x="82.2" y="196.8" width="6.7" height="6.5" fill="#1f3b61"/><rect x="83.5" y="199.0" width="9.5" height="9" rx="2" fill="#5fa052" stroke="#3f7f36"/><path d="M85.5 203.5 H91 M88.25 200.8 V206.2" stroke="#fff" stroke-width="2"/><path d="M71 228 C69.5 223.5 72.5 221 77 221.5 C79 220.8 81 220.8 83 221.5 C87.5 221 90 223.5 89 228 C88.5 230.5 87 232 86 232.5 C86 234 86.8 235.5 88 236 L87.5 237.5 C85 237.5 83.5 235.5 83.3 233 C82.5 236 82 238.5 80 239.8 C78.5 239.5 78 237.5 78.5 235 C78.5 233 77.5 232 76 231.5 C74.5 232 73.5 232.5 72.5 232 C71.5 231 71.2 229.5 71 228 Z" fill="#6a99d0" stroke="#2f5585" stroke-width="1.1"/><path d="M77.5 222 C75.5 225 75.5 229 78 231.5 M82.5 222 C85 225 85 229 83 232.5" stroke="#2f5585" stroke-width="1" fill="none"/><rect x="83.5" y="237.0" width="9.5" height="9" rx="2" fill="#5fa052" stroke="#3f7f36"/><path d="M85.5 241.5 H91 M88.25 238.8 V244.2" stroke="#fff" stroke-width="2"/><path d="M69.5 283.5 C72 274 78 266 92 259.5 C90 268 84 276 73 279 Z" fill="#a9c6ea" stroke="#2f5585" stroke-width="1.1"/><path d="M70 283 C76 274 82 268 90 262" stroke="#2f5585" stroke-width="0.8" fill="none"/><rect x="83.5" y="275.0" width="9.5" height="9" rx="2" fill="#5fa052" stroke="#3f7f36"/><path d="M85.5 279.5 H91 M88.25 276.8 V282.2" stroke="#fff" stroke-width="2"/><path d="M69.5 298 C78 298 87 300.5 92 309 C86 309 78 313 69.5 319.5 C73.5 312 74.5 305 69.5 298 Z" fill="#6a99d0" stroke="#1f3f6a" stroke-width="1.3"/><path d="M76 299 C79 304 79 310 77 315 M82 300.5 C84.5 305 84.5 309 83.5 312 M87 303 C88.5 306 88.5 308 88 309.5" stroke="#1f3f6a" stroke-width="1" fill="none"/><rect x="83.5" y="313.5" width="9.5" height="9" rx="2" fill="#5fa052" stroke="#3f7f36"/><path d="M85.5 318 H91 M88.25 315.3 V320.7" stroke="#fff" stroke-width="2"/><ellipse cx="80.9" cy="346.3" rx="11.5" ry="10" fill="#b9d2ef" stroke="#5b88c2" stroke-width="1.2"/><path d="M73 340 L77 339 L80 342 L78 346 L74 345 Z M82 339 L88 340 L89 344 L85 347 L83 343 Z M76 349 L80 348 L81 353 L78 355 Z" fill="#4a6f9e"/><path d="M69.5 346.3 H92.3 M80.9 336.3 V356.3" stroke="#7aa0d0" stroke-width="0.6"/><rect x="83.5" y="351.5" width="9.5" height="9" rx="2" fill="#5fa052" stroke="#3f7f36"/><path d="M85.5 356 H91 M88.25 353.3 V358.7" stroke="#fff" stroke-width="2"/><ellipse cx="80.9" cy="384.6" rx="11.5" ry="10" fill="#dfe8f4" stroke="#1f3b61" stroke-width="1.8"/><path d="M70 380 H91.8 M70 389 H91.8" stroke="#1f3b61" stroke-width="3"/><ellipse cx="80.9" cy="384.6" rx="4.5" ry="10" fill="none" stroke="#1f3b61" stroke-width="1.8"/><rect x="83.5" y="389.5" width="9.5" height="9" rx="2" fill="#5fa052" stroke="#3f7f36"/><path d="M85.5 394 H91 M88.25 391.3 V396.7" stroke="#fff" stroke-width="2"/><ellipse cx="80.9" cy="422.9" rx="11.5" ry="10" fill="#e4eef9" stroke="#6b96cc" stroke-width="1.1"/><path d="M70 419 H91.8 M70 427 H91.8" stroke="#9dbde3" stroke-width="0.8"/><ellipse cx="80.9" cy="422.9" rx="4.5" ry="10" fill="none" stroke="#9dbde3" stroke-width="0.8"/><path d="M73.5 416 L78 428 L83 416 L87.5 416" stroke="#1f2f44" stroke-width="1.4" fill="none"/><circle cx="73.5" cy="416" r="1.7" fill="#eef2f6" stroke="#1f2f44" stroke-width="1.1"/><circle cx="78" cy="428" r="1.7" fill="#eef2f6" stroke="#1f2f44" stroke-width="1.1"/><circle cx="83" cy="416" r="1.7" fill="#eef2f6" stroke="#1f2f44" stroke-width="1.1"/><circle cx="87.5" cy="416" r="1.7" fill="#eef2f6" stroke="#1f2f44" stroke-width="1.1"/><rect x="83.5" y="427.5" width="9.5" height="9" rx="2" fill="#5fa052" stroke="#3f7f36"/><path d="M85.5 432 H91 M88.25 429.3 V434.7" stroke="#fff" stroke-width="2"/><path d="M78 453 C82 452.5 84.5 455 84 458.5 C83.5 462.5 80 466.5 74.5 469 L73.8 468 C77 466 79 463.5 79.3 461.5 C76 461.5 74.2 459.5 74.5 457 C74.8 454.5 76 453.3 78 453 Z" fill="#2f5f9a"/><rect x="83.5" y="465.5" width="9.5" height="9" rx="2" fill="#5fa052" stroke="#3f7f36"/><path d="M85.5 470 H91 M88.25 467.3 V472.7" stroke="#fff" stroke-width="2"/><path d="M70.8 489.3 L77.5 505 L85.4 489.3 L91 489.3" stroke="#2f4a66" stroke-width="1.4" fill="none"/><circle cx="70.8" cy="489.3" r="1.7" fill="#eef2f6" stroke="#2f4a66" stroke-width="1.1"/><circle cx="77.5" cy="505" r="1.7" fill="#eef2f6" stroke="#2f4a66" stroke-width="1.1"/><circle cx="85.4" cy="489.3" r="1.7" fill="#eef2f6" stroke="#2f4a66" stroke-width="1.1"/><circle cx="91" cy="489.3" r="1.7" fill="#eef2f6" stroke="#2f4a66" stroke-width="1.1"/><rect x="84.0" y="503.0" width="8.5" height="8.5" rx="2" fill="#d2a623" stroke="#b58a10"/><path d="M85.45 507.25 L91.05 507.25" stroke="#fff" stroke-width="1.2"/><path d="M86.27 505.27 L90.23 509.23" stroke="#fff" stroke-width="1.2"/><path d="M88.25 504.45 L88.25 510.05" stroke="#fff" stroke-width="1.2"/><path d="M90.23 505.27 L86.27 509.23" stroke="#fff" stroke-width="1.2"/><path d="M94.5 502.5 H102.5 L98.5 508.5 Z" fill="#555"/><rect x="70.5" y="528.5" width="19" height="19" fill="#ececec" stroke="#777" stroke-width="1"/><rect x="84.0" y="541.0" width="8.5" height="8" rx="2" fill="#e85a5a" stroke="#c03030"/><path d="M85.5 545 H91" stroke="#fff" stroke-width="1.8"/><rect x="64.5" y="564.0" width="2" height="2" fill="#fbfbfb"/><rect x="64.0" y="563.5" width="1.6" height="1.6" fill="#a6a6a6"/><rect x="67.5" y="566.0" width="2" height="2" fill="#fbfbfb"/><rect x="67.0" y="565.5" width="1.6" height="1.6" fill="#a6a6a6"/><rect x="70.5" y="564.0" width="2" height="2" fill="#fbfbfb"/><rect x="70.0" y="563.5" width="1.6" height="1.6" fill="#a6a6a6"/><rect x="73.5" y="566.0" width="2" height="2" fill="#fbfbfb"/><rect x="73.0" y="565.5" width="1.6" height="1.6" fill="#a6a6a6"/><rect x="76.5" y="564.0" width="2" height="2" fill="#fbfbfb"/><rect x="76.0" y="563.5" width="1.6" height="1.6" fill="#a6a6a6"/><rect x="79.5" y="566.0" width="2" height="2" fill="#fbfbfb"/><rect x="79.0" y="565.5" width="1.6" height="1.6" fill="#a6a6a6"/><rect x="82.5" y="564.0" width="2" height="2" fill="#fbfbfb"/><rect x="82.0" y="563.5" width="1.6" height="1.6" fill="#a6a6a6"/><rect x="85.5" y="566.0" width="2" height="2" fill="#fbfbfb"/><rect x="85.0" y="565.5" width="1.6" height="1.6" fill="#a6a6a6"/><rect x="88.5" y="564.0" width="2" height="2" fill="#fbfbfb"/><rect x="88.0" y="563.5" width="1.6" height="1.6" fill="#a6a6a6"/><rect x="91.5" y="566.0" width="2" height="2" fill="#fbfbfb"/><rect x="91.0" y="565.5" width="1.6" height="1.6" fill="#a6a6a6"/><rect x="94.5" y="564.0" width="2" height="2" fill="#fbfbfb"/><rect x="94.0" y="563.5" width="1.6" height="1.6" fill="#a6a6a6"/><rect x="97.5" y="566.0" width="2" height="2" fill="#fbfbfb"/><rect x="97.0" y="565.5" width="1.6" height="1.6" fill="#a6a6a6"/><circle cx="114.8" cy="140.8" r="6.9" fill="#4a4a4a"/><path d="M112.2 138.20000000000002 L117.39999999999999 143.4 M117.39999999999999 138.20000000000002 L112.2 143.4" stroke="#fff" stroke-width="1.9"/><circle cx="134.8" cy="140.8" r="6.9" fill="#4a4a4a"/><rect x="133.60000000000002" y="137.5" width="4.5" height="3.6" fill="none" stroke="#fff" stroke-width="1.1"/><rect x="131.5" y="140.0" width="4.6" height="3.8" fill="#4a4a4a" stroke="#fff" stroke-width="1.1"/><circle cx="114.8" cy="839.2" r="6.9" fill="#4a4a4a"/><path d="M112.2 836.6 L117.39999999999999 841.8000000000001 M117.39999999999999 836.6 L112.2 841.8000000000001" stroke="#fff" stroke-width="1.9"/><circle cx="134.8" cy="839.2" r="6.9" fill="#4a4a4a"/><rect x="133.60000000000002" y="835.9000000000001" width="4.5" height="3.6" fill="none" stroke="#fff" stroke-width="1.1"/><rect x="131.5" y="838.4000000000001" width="4.6" height="3.8" fill="#4a4a4a" stroke="#fff" stroke-width="1.1"/><g transform="translate(374.4,901.9)"><path transform="rotate(0)" d="M0 -1.2 L-2.3 -7.5 L0 -6 L2.3 -7.5 Z" fill="#1e90e0" stroke="#2a3e55" stroke-width="0.6" stroke-linejoin="round"/><path transform="rotate(90)" d="M0 -1.2 L-2.3 -7.5 L0 -6 L2.3 -7.5 Z" fill="#1e90e0" stroke="#2a3e55" stroke-width="0.6" stroke-linejoin="round"/><path transform="rotate(180)" d="M0 -1.2 L-2.3 -7.5 L0 -6 L2.3 -7.5 Z" fill="#1e90e0" stroke="#2a3e55" stroke-width="0.6" stroke-linejoin="round"/><path transform="rotate(270)" d="M0 -1.2 L-2.3 -7.5 L0 -6 L2.3 -7.5 Z" fill="#1e90e0" stroke="#2a3e55" stroke-width="0.6" stroke-linejoin="round"/><circle r="2" fill="#e82424"/></g><g transform="translate(374.4,961.9)"><path transform="rotate(0)" d="M0 -1.2 L-2.3 -7.5 L0 -6 L2.3 -7.5 Z" fill="#1e90e0" stroke="#2a3e55" stroke-width="0.6" stroke-linejoin="round"/><path transform="rotate(90)" d="M0 -1.2 L-2.3 -7.5 L0 -6 L2.3 -7.5 Z" fill="#1e90e0" stroke="#2a3e55" stroke-width="0.6" stroke-linejoin="round"/><path transform="rotate(180)" d="M0 -1.2 L-2.3 -7.5 L0 -6 L2.3 -7.5 Z" fill="#1e90e0" stroke="#2a3e55" stroke-width="0.6" stroke-linejoin="round"/><path transform="rotate(270)" d="M0 -1.2 L-2.3 -7.5 L0 -6 L2.3 -7.5 Z" fill="#1e90e0" stroke="#2a3e55" stroke-width="0.6" stroke-linejoin="round"/><circle r="2" fill="#e82424"/></g><path d="M374 995.5 L377 991.5 L380 995.5 Z M374 999.5 L377 1003.5 L380 999.5 Z" fill="#333"/><g transform="translate(234,1147)"><rect x="-6" y="-6.5" width="12" height="13" rx="3" fill="#ececec" stroke="#cfcfcf" stroke-width="1"/><circle cx="5.8" cy="5.8" r="2.1" fill="#fff" stroke="#b82020" stroke-width="1.1"/><rect x="-2.6" y="-2" width="5.2" height="4" transform="translate(3.6 3.6) rotate(45)" fill="#ee4040"/><circle cx="5.8" cy="-5.8" r="2.1" fill="#fff" stroke="#b82020" stroke-width="1.1"/><rect x="-2.6" y="-2" width="5.2" height="4" transform="translate(3.6 -3.6) rotate(-45)" fill="#ee4040"/><circle cx="-5.8" cy="5.8" r="2.1" fill="#fff" stroke="#b82020" stroke-width="1.1"/><rect x="-2.6" y="-2" width="5.2" height="4" transform="translate(-3.6 3.6) rotate(-45)" fill="#ee4040"/><circle cx="-5.8" cy="-5.8" r="2.1" fill="#fff" stroke="#b82020" stroke-width="1.1"/><rect x="-2.6" y="-2" width="5.2" height="4" transform="translate(-3.6 -3.6) rotate(45)" fill="#ee4040"/></g></svg><!--/ICONS-->
</body></html>
